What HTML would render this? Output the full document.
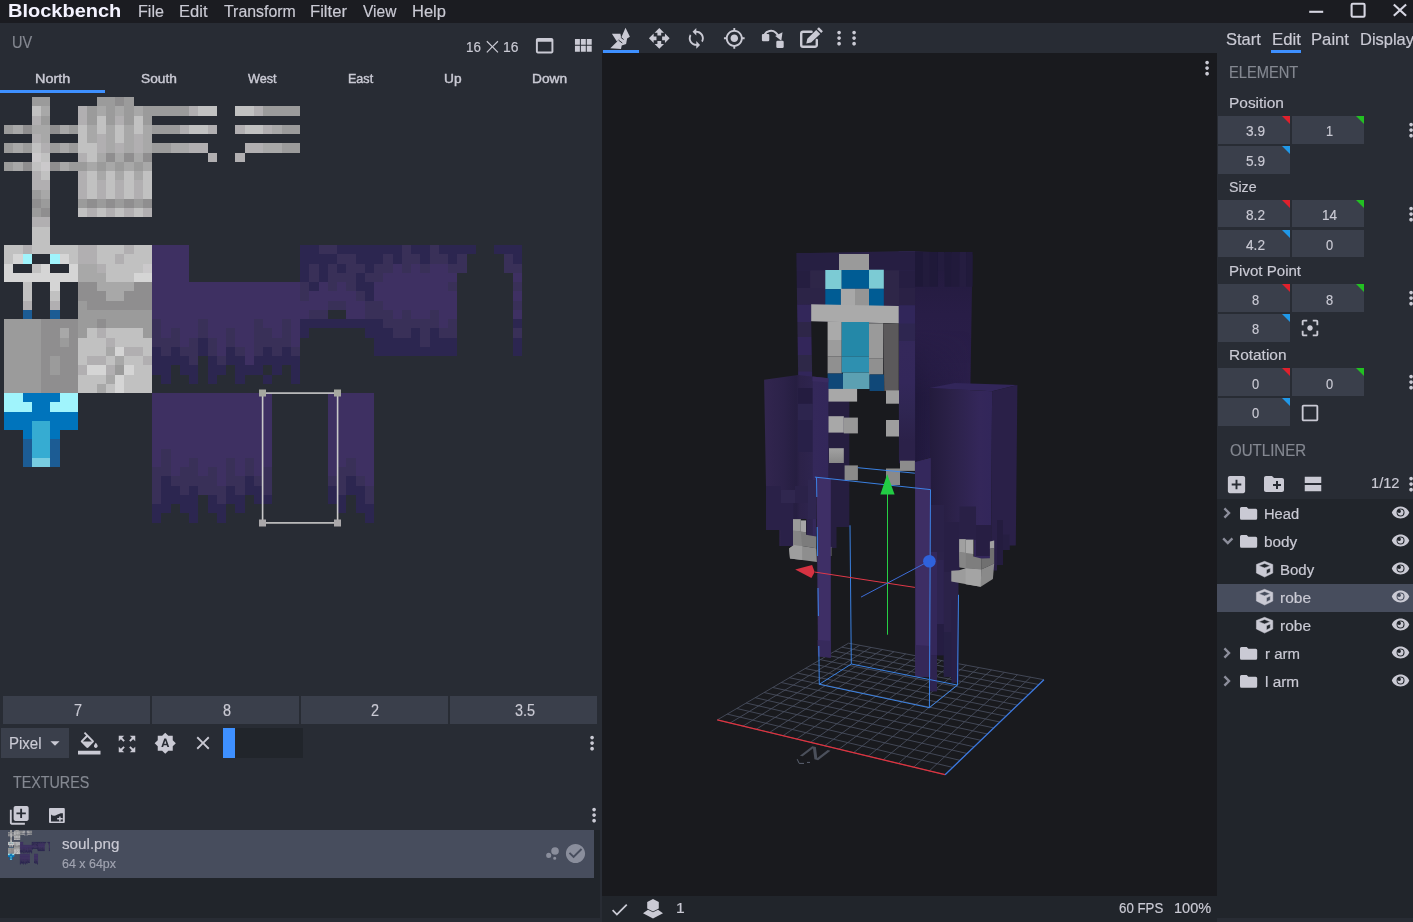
<!DOCTYPE html>
<html lang="en"><head><meta charset="utf-8"><title>Blockbench</title>
<style>
html,body{margin:0;padding:0;background:#282c34;}
body{width:1413px;height:922px;overflow:hidden;position:relative;font-family:"Liberation Sans",sans-serif;}
#app{position:absolute;left:0;top:0;width:1413px;height:922px;overflow:hidden;will-change:transform;}
.b{position:absolute;}
.ic{position:absolute;display:block;overflow:visible;}
.t{position:absolute;white-space:nowrap;line-height:1.149;transform-origin:0 50%;}
</style></head>
<body><div id="app">
<div class="b" style="left:0.00px;top:0.00px;width:1413.00px;height:922.00px;background:#282c34;"></div>
<div class="b" style="left:0.00px;top:0.00px;width:1413.00px;height:22.50px;background:#1b1c21;"></div>
<div class="b" style="left:602.00px;top:53.00px;width:615.00px;height:843.00px;background:#191a1e;"></div>
<div class="b" style="left:602.00px;top:896.00px;width:615.00px;height:26.00px;background:#21252b;"></div>
<div class="b" style="left:1217.00px;top:499.00px;width:196.00px;height:423.00px;background:#21252b;"></div>
<div class="b" style="left:1217.00px;top:918.00px;width:196.00px;height:4.00px;background:#282c34;"></div>
<div class="b" style="left:0.00px;top:830.20px;width:600.00px;height:87.40px;background:#21252b;"></div>
<span class="t " style="left:8.00px;top:0.17px;font-size:18.60px;color:#f4f3ff;font-weight:bold;transform:scaleX(1.0753);">Blockbench</span>
<span class="t " style="left:138.00px;top:1.62px;font-size:17.00px;color:#cacad4;-webkit-text-stroke:0.18px #cacad4;transform:scaleX(0.9475);">File</span>
<span class="t " style="left:179.00px;top:1.62px;font-size:17.00px;color:#cacad4;-webkit-text-stroke:0.18px #cacad4;transform:scaleX(0.9720);">Edit</span>
<span class="t " style="left:224.00px;top:1.62px;font-size:17.00px;color:#cacad4;-webkit-text-stroke:0.18px #cacad4;transform:scaleX(0.9337);">Transform</span>
<span class="t " style="left:310.00px;top:1.62px;font-size:17.00px;color:#cacad4;-webkit-text-stroke:0.18px #cacad4;transform:scaleX(0.9776);">Filter</span>
<span class="t " style="left:363.00px;top:1.62px;font-size:17.00px;color:#cacad4;-webkit-text-stroke:0.18px #cacad4;transform:scaleX(0.9138);">View</span>
<span class="t " style="left:412.00px;top:1.62px;font-size:17.00px;color:#cacad4;-webkit-text-stroke:0.18px #cacad4;transform:scaleX(0.9698);">Help</span>
<svg class="ic" style="left:1300px;top:0;width:113px;height:22px" viewBox="1300 0 113 22"><g stroke="#d6d6e2" stroke-width="2.1" fill="none"><path d="M1309.2 11.8h14"/><rect x="1351.6" y="3.7" width="13" height="13" rx="1.2"/><path d="M1393.8 4.4l12.3 11.4M1406.1 4.4l-12.3 11.4"/></g></svg>
<span class="t " style="left:12.00px;top:32.76px;font-size:16.40px;color:#848891;-webkit-text-stroke:0.18px #848891;transform:scaleX(0.8844);">UV</span>
<span class="t " style="left:466.00px;top:38.16px;font-size:15.40px;color:#cacad4;-webkit-text-stroke:0.18px #cacad4;transform:scaleX(0.8680);">16</span>
<span class="t " style="left:503.00px;top:38.16px;font-size:15.40px;color:#cacad4;-webkit-text-stroke:0.18px #cacad4;transform:scaleX(0.9006);">16</span>
<span class="t" style="left:482.7px;top:33px;font-size:23px;line-height:normal;font-family:'DejaVu Sans','Liberation Sans',sans-serif;font-weight:200;color:#cacad4">⨯</span>
<svg class="ic" style="left:533.40px;top:34.30px;width:23.30px;height:23.30px" viewBox="0 0 24 24"><path fill="#cacad4" fill-rule="evenodd" d="M19 4H5c-1.11 0-2 .9-2 2v12c0 1.1.89 2 2 2h14c1.1 0 2-.9 2-2V6c0-1.1-.89-2-2-2zm0 14H5V8h14v10z"/></svg>
<svg class="ic" style="left:571.40px;top:33.90px;width:23.70px;height:23.70px" viewBox="0 0 24 24"><path fill="#cacad4" fill-rule="evenodd" d="M4 11h5V5H4v6zm0 7h5v-6H4v6zm6 0h5v-6h-5v6zm6 0h5v-6h-5v6zm-6-7h5V5h-5v6zm6-6v6h5V5h-5z"/></svg>
<span class="t " style="left:35.00px;top:71.79px;font-size:12.50px;color:#cacad4;-webkit-text-stroke:0.40px #cacad4;transform:scaleX(1.1557);">North</span>
<span class="t " style="left:141.00px;top:71.79px;font-size:12.50px;color:#cacad4;-webkit-text-stroke:0.40px #cacad4;transform:scaleX(1.0986);">South</span>
<span class="t " style="left:248.00px;top:71.79px;font-size:12.50px;color:#cacad4;-webkit-text-stroke:0.40px #cacad4;transform:scaleX(1.0111);">West</span>
<span class="t " style="left:348.00px;top:71.79px;font-size:12.50px;color:#cacad4;-webkit-text-stroke:0.40px #cacad4;transform:scaleX(1.0042);">East</span>
<span class="t " style="left:444.00px;top:71.79px;font-size:12.50px;color:#cacad4;-webkit-text-stroke:0.40px #cacad4;transform:scaleX(1.0966);">Up</span>
<span class="t " style="left:532.00px;top:71.79px;font-size:12.50px;color:#cacad4;-webkit-text-stroke:0.40px #cacad4;transform:scaleX(1.0965);">Down</span>
<div class="b" style="left:0.00px;top:90.00px;width:105.00px;height:3.00px;background:#3e90ff;"></div>
<svg class="ic" style="left:0;top:93px;width:602px;height:600px" viewBox="0 93 602 600" shape-rendering="crispEdges"><rect x="31.75" y="97.00" width="18.50" height="9.25" fill="#9b9b9b"/><rect x="96.50" y="97.00" width="18.50" height="9.25" fill="#9b9b9b"/><rect x="115.00" y="97.00" width="9.25" height="9.25" fill="#8f8e8f"/><rect x="124.25" y="97.00" width="9.25" height="9.25" fill="#9b9b9b"/><rect x="31.75" y="106.25" width="9.25" height="9.25" fill="#c1c1c1"/><rect x="41.00" y="106.25" width="9.25" height="9.25" fill="#a8a8a8"/><rect x="78.00" y="106.25" width="9.25" height="9.25" fill="#b1afb1"/><rect x="87.25" y="106.25" width="9.25" height="9.25" fill="#9b9b9b"/><rect x="96.50" y="106.25" width="9.25" height="9.25" fill="#a8a8a8"/><rect x="105.75" y="106.25" width="9.25" height="9.25" fill="#9b9b9b"/><rect x="115.00" y="106.25" width="9.25" height="9.25" fill="#a8a8a8"/><rect x="124.25" y="106.25" width="9.25" height="9.25" fill="#9b9b9b"/><rect x="133.50" y="106.25" width="9.25" height="9.25" fill="#a8a8a8"/><rect x="142.75" y="106.25" width="46.25" height="9.25" fill="#9b9b9b"/><rect x="189.00" y="106.25" width="9.25" height="9.25" fill="#b1afb1"/><rect x="198.25" y="106.25" width="18.50" height="9.25" fill="#c1c1c1"/><rect x="235.25" y="106.25" width="18.50" height="9.25" fill="#c1c1c1"/><rect x="253.75" y="106.25" width="9.25" height="9.25" fill="#b1afb1"/><rect x="263.00" y="106.25" width="37.00" height="9.25" fill="#9b9b9b"/><rect x="31.75" y="115.50" width="9.25" height="9.25" fill="#b1afb1"/><rect x="41.00" y="115.50" width="9.25" height="9.25" fill="#9b9b9b"/><rect x="78.00" y="115.50" width="9.25" height="9.25" fill="#b1afb1"/><rect x="87.25" y="115.50" width="9.25" height="9.25" fill="#9b9b9b"/><rect x="96.50" y="115.50" width="9.25" height="9.25" fill="#c1c1c1"/><rect x="105.75" y="115.50" width="9.25" height="9.25" fill="#9b9b9b"/><rect x="115.00" y="115.50" width="9.25" height="9.25" fill="#b1afb1"/><rect x="124.25" y="115.50" width="9.25" height="9.25" fill="#9b9b9b"/><rect x="133.50" y="115.50" width="9.25" height="9.25" fill="#c1c1c1"/><rect x="142.75" y="115.50" width="9.25" height="9.25" fill="#9b9b9b"/><rect x="4.00" y="124.75" width="9.25" height="9.25" fill="#9b9b9b"/><rect x="13.25" y="124.75" width="9.25" height="9.25" fill="#a8a8a8"/><rect x="22.50" y="124.75" width="9.25" height="9.25" fill="#8f8e8f"/><rect x="31.75" y="124.75" width="18.50" height="9.25" fill="#a8a8a8"/><rect x="50.25" y="124.75" width="9.25" height="9.25" fill="#8f8e8f"/><rect x="59.50" y="124.75" width="9.25" height="9.25" fill="#a8a8a8"/><rect x="68.75" y="124.75" width="9.25" height="9.25" fill="#9b9b9b"/><rect x="78.00" y="124.75" width="9.25" height="9.25" fill="#c1c1c1"/><rect x="87.25" y="124.75" width="9.25" height="9.25" fill="#a8a8a8"/><rect x="96.50" y="124.75" width="9.25" height="9.25" fill="#c1c1c1"/><rect x="105.75" y="124.75" width="9.25" height="9.25" fill="#a8a8a8"/><rect x="115.00" y="124.75" width="9.25" height="9.25" fill="#c1c1c1"/><rect x="124.25" y="124.75" width="9.25" height="9.25" fill="#a8a8a8"/><rect x="133.50" y="124.75" width="9.25" height="9.25" fill="#c1c1c1"/><rect x="142.75" y="124.75" width="9.25" height="9.25" fill="#a8a8a8"/><rect x="152.00" y="124.75" width="27.75" height="9.25" fill="#9b9b9b"/><rect x="179.75" y="124.75" width="9.25" height="9.25" fill="#b1afb1"/><rect x="189.00" y="124.75" width="18.50" height="9.25" fill="#c1c1c1"/><rect x="207.50" y="124.75" width="9.25" height="9.25" fill="#b1afb1"/><rect x="235.25" y="124.75" width="9.25" height="9.25" fill="#b1afb1"/><rect x="244.50" y="124.75" width="18.50" height="9.25" fill="#c1c1c1"/><rect x="263.00" y="124.75" width="9.25" height="9.25" fill="#b1afb1"/><rect x="272.25" y="124.75" width="9.25" height="9.25" fill="#a8a8a8"/><rect x="281.50" y="124.75" width="18.50" height="9.25" fill="#9b9b9b"/><rect x="31.75" y="134.00" width="9.25" height="9.25" fill="#b1afb1"/><rect x="41.00" y="134.00" width="9.25" height="9.25" fill="#a8a8a8"/><rect x="78.00" y="134.00" width="9.25" height="9.25" fill="#c1c1c1"/><rect x="87.25" y="134.00" width="9.25" height="9.25" fill="#a8a8a8"/><rect x="96.50" y="134.00" width="9.25" height="9.25" fill="#b1afb1"/><rect x="105.75" y="134.00" width="9.25" height="9.25" fill="#a8a8a8"/><rect x="115.00" y="134.00" width="9.25" height="9.25" fill="#c1c1c1"/><rect x="124.25" y="134.00" width="9.25" height="9.25" fill="#a8a8a8"/><rect x="133.50" y="134.00" width="9.25" height="9.25" fill="#b1afb1"/><rect x="142.75" y="134.00" width="9.25" height="9.25" fill="#a8a8a8"/><rect x="4.00" y="143.25" width="9.25" height="9.25" fill="#9b9b9b"/><rect x="13.25" y="143.25" width="9.25" height="9.25" fill="#a8a8a8"/><rect x="22.50" y="143.25" width="9.25" height="9.25" fill="#9b9b9b"/><rect x="31.75" y="143.25" width="9.25" height="9.25" fill="#c1c1c1"/><rect x="41.00" y="143.25" width="9.25" height="9.25" fill="#b1afb1"/><rect x="50.25" y="143.25" width="9.25" height="9.25" fill="#9b9b9b"/><rect x="59.50" y="143.25" width="9.25" height="9.25" fill="#a8a8a8"/><rect x="68.75" y="143.25" width="9.25" height="9.25" fill="#9b9b9b"/><rect x="78.00" y="143.25" width="18.50" height="9.25" fill="#c1c1c1"/><rect x="96.50" y="143.25" width="9.25" height="9.25" fill="#b1afb1"/><rect x="105.75" y="143.25" width="9.25" height="9.25" fill="#a8a8a8"/><rect x="115.00" y="143.25" width="9.25" height="9.25" fill="#b1afb1"/><rect x="124.25" y="143.25" width="9.25" height="9.25" fill="#a8a8a8"/><rect x="133.50" y="143.25" width="9.25" height="9.25" fill="#b1afb1"/><rect x="142.75" y="143.25" width="9.25" height="9.25" fill="#a8a8a8"/><rect x="152.00" y="143.25" width="18.50" height="9.25" fill="#9b9b9b"/><rect x="170.50" y="143.25" width="18.50" height="9.25" fill="#a8a8a8"/><rect x="189.00" y="143.25" width="18.50" height="9.25" fill="#b1afb1"/><rect x="244.50" y="143.25" width="18.50" height="9.25" fill="#b1afb1"/><rect x="263.00" y="143.25" width="18.50" height="9.25" fill="#a8a8a8"/><rect x="281.50" y="143.25" width="18.50" height="9.25" fill="#9b9b9b"/><rect x="31.75" y="152.50" width="9.25" height="9.25" fill="#cbc9cb"/><rect x="41.00" y="152.50" width="9.25" height="9.25" fill="#c1c1c1"/><rect x="78.00" y="152.50" width="9.25" height="9.25" fill="#b1afb1"/><rect x="87.25" y="152.50" width="9.25" height="9.25" fill="#c1c1c1"/><rect x="96.50" y="152.50" width="9.25" height="9.25" fill="#a8a8a8"/><rect x="105.75" y="152.50" width="9.25" height="9.25" fill="#8f8e8f"/><rect x="115.00" y="152.50" width="9.25" height="9.25" fill="#a8a8a8"/><rect x="124.25" y="152.50" width="9.25" height="9.25" fill="#8f8e8f"/><rect x="133.50" y="152.50" width="9.25" height="9.25" fill="#a8a8a8"/><rect x="142.75" y="152.50" width="9.25" height="9.25" fill="#8f8e8f"/><rect x="207.50" y="152.50" width="9.25" height="9.25" fill="#b1afb1"/><rect x="235.25" y="152.50" width="9.25" height="9.25" fill="#b1afb1"/><rect x="4.00" y="161.75" width="9.25" height="9.25" fill="#9b9b9b"/><rect x="13.25" y="161.75" width="9.25" height="9.25" fill="#a8a8a8"/><rect x="22.50" y="161.75" width="9.25" height="9.25" fill="#8f8e8f"/><rect x="31.75" y="161.75" width="9.25" height="9.25" fill="#c1c1c1"/><rect x="41.00" y="161.75" width="9.25" height="9.25" fill="#cbc9cb"/><rect x="50.25" y="161.75" width="9.25" height="9.25" fill="#8f8e8f"/><rect x="59.50" y="161.75" width="9.25" height="9.25" fill="#a8a8a8"/><rect x="68.75" y="161.75" width="18.50" height="9.25" fill="#9b9b9b"/><rect x="87.25" y="161.75" width="9.25" height="9.25" fill="#a8a8a8"/><rect x="96.50" y="161.75" width="9.25" height="9.25" fill="#9b9b9b"/><rect x="105.75" y="161.75" width="9.25" height="9.25" fill="#a8a8a8"/><rect x="115.00" y="161.75" width="9.25" height="9.25" fill="#9b9b9b"/><rect x="124.25" y="161.75" width="9.25" height="9.25" fill="#a8a8a8"/><rect x="133.50" y="161.75" width="9.25" height="9.25" fill="#9b9b9b"/><rect x="142.75" y="161.75" width="9.25" height="9.25" fill="#a8a8a8"/><rect x="31.75" y="171.00" width="9.25" height="9.25" fill="#b1afb1"/><rect x="41.00" y="171.00" width="9.25" height="9.25" fill="#c1c1c1"/><rect x="78.00" y="171.00" width="9.25" height="9.25" fill="#b1afb1"/><rect x="87.25" y="171.00" width="9.25" height="9.25" fill="#c1c1c1"/><rect x="96.50" y="171.00" width="9.25" height="9.25" fill="#a8a8a8"/><rect x="105.75" y="171.00" width="9.25" height="9.25" fill="#c1c1c1"/><rect x="115.00" y="171.00" width="9.25" height="9.25" fill="#a8a8a8"/><rect x="124.25" y="171.00" width="9.25" height="9.25" fill="#c1c1c1"/><rect x="133.50" y="171.00" width="9.25" height="9.25" fill="#a8a8a8"/><rect x="142.75" y="171.00" width="9.25" height="9.25" fill="#c1c1c1"/><rect x="31.75" y="180.25" width="18.50" height="9.25" fill="#b1afb1"/><rect x="78.00" y="180.25" width="9.25" height="9.25" fill="#b1afb1"/><rect x="87.25" y="180.25" width="9.25" height="9.25" fill="#c1c1c1"/><rect x="96.50" y="180.25" width="9.25" height="9.25" fill="#b1afb1"/><rect x="105.75" y="180.25" width="9.25" height="9.25" fill="#c1c1c1"/><rect x="115.00" y="180.25" width="9.25" height="9.25" fill="#b1afb1"/><rect x="124.25" y="180.25" width="9.25" height="9.25" fill="#c1c1c1"/><rect x="133.50" y="180.25" width="9.25" height="9.25" fill="#b1afb1"/><rect x="142.75" y="180.25" width="9.25" height="9.25" fill="#c1c1c1"/><rect x="31.75" y="189.50" width="9.25" height="9.25" fill="#9b9b9b"/><rect x="41.00" y="189.50" width="9.25" height="9.25" fill="#a8a8a8"/><rect x="78.00" y="189.50" width="9.25" height="9.25" fill="#b1afb1"/><rect x="87.25" y="189.50" width="9.25" height="9.25" fill="#c1c1c1"/><rect x="96.50" y="189.50" width="9.25" height="9.25" fill="#b1afb1"/><rect x="105.75" y="189.50" width="9.25" height="9.25" fill="#c1c1c1"/><rect x="115.00" y="189.50" width="9.25" height="9.25" fill="#b1afb1"/><rect x="124.25" y="189.50" width="9.25" height="9.25" fill="#c1c1c1"/><rect x="133.50" y="189.50" width="9.25" height="9.25" fill="#b1afb1"/><rect x="142.75" y="189.50" width="9.25" height="9.25" fill="#c1c1c1"/><rect x="31.75" y="198.75" width="9.25" height="9.25" fill="#8f8e8f"/><rect x="41.00" y="198.75" width="9.25" height="9.25" fill="#9b9b9b"/><rect x="78.00" y="198.75" width="9.25" height="9.25" fill="#9b9b9b"/><rect x="87.25" y="198.75" width="9.25" height="9.25" fill="#8f8e8f"/><rect x="96.50" y="198.75" width="9.25" height="9.25" fill="#9b9b9b"/><rect x="105.75" y="198.75" width="9.25" height="9.25" fill="#8f8e8f"/><rect x="115.00" y="198.75" width="9.25" height="9.25" fill="#9b9b9b"/><rect x="124.25" y="198.75" width="9.25" height="9.25" fill="#8f8e8f"/><rect x="133.50" y="198.75" width="9.25" height="9.25" fill="#9b9b9b"/><rect x="142.75" y="198.75" width="9.25" height="9.25" fill="#8f8e8f"/><rect x="31.75" y="208.00" width="9.25" height="9.25" fill="#9b9b9b"/><rect x="41.00" y="208.00" width="9.25" height="9.25" fill="#8f8e8f"/><rect x="78.00" y="208.00" width="9.25" height="9.25" fill="#c1c1c1"/><rect x="87.25" y="208.00" width="9.25" height="9.25" fill="#b1afb1"/><rect x="96.50" y="208.00" width="9.25" height="9.25" fill="#c1c1c1"/><rect x="105.75" y="208.00" width="9.25" height="9.25" fill="#b1afb1"/><rect x="115.00" y="208.00" width="9.25" height="9.25" fill="#c1c1c1"/><rect x="124.25" y="208.00" width="9.25" height="9.25" fill="#b1afb1"/><rect x="133.50" y="208.00" width="9.25" height="9.25" fill="#c1c1c1"/><rect x="142.75" y="208.00" width="9.25" height="9.25" fill="#b1afb1"/><rect x="31.75" y="217.25" width="18.50" height="9.25" fill="#b1afb1"/><rect x="31.75" y="226.50" width="18.50" height="9.25" fill="#c1c1c1"/><rect x="31.75" y="235.75" width="18.50" height="9.25" fill="#c1c1c1"/><rect x="4.00" y="245.00" width="18.50" height="9.25" fill="#c1c1c1"/><rect x="22.50" y="245.00" width="9.25" height="9.25" fill="#b1afb1"/><rect x="31.75" y="245.00" width="46.25" height="9.25" fill="#c1c1c1"/><rect x="78.00" y="245.00" width="18.50" height="9.25" fill="#b1afb1"/><rect x="96.50" y="245.00" width="27.75" height="9.25" fill="#c1c1c1"/><rect x="124.25" y="245.00" width="9.25" height="9.25" fill="#b1afb1"/><rect x="133.50" y="245.00" width="18.50" height="9.25" fill="#c1c1c1"/><rect x="152.00" y="245.00" width="37.00" height="9.25" fill="#3e3062"/><rect x="300.00" y="245.00" width="18.50" height="9.25" fill="#2c2650"/><rect x="318.50" y="245.00" width="18.50" height="9.25" fill="#393058"/><rect x="337.00" y="245.00" width="64.75" height="9.25" fill="#2c2650"/><rect x="401.75" y="245.00" width="9.25" height="9.25" fill="#393058"/><rect x="411.00" y="245.00" width="18.50" height="9.25" fill="#2c2650"/><rect x="429.50" y="245.00" width="9.25" height="9.25" fill="#393058"/><rect x="438.75" y="245.00" width="37.00" height="9.25" fill="#2c2650"/><rect x="494.25" y="245.00" width="27.75" height="9.25" fill="#2c2650"/><rect x="4.00" y="254.25" width="9.25" height="9.25" fill="#c1c1c1"/><rect x="13.25" y="254.25" width="9.25" height="9.25" fill="#d5d5d5"/><rect x="22.50" y="254.25" width="9.25" height="9.25" fill="#a0f4fc"/><rect x="50.25" y="254.25" width="9.25" height="9.25" fill="#a0f4fc"/><rect x="59.50" y="254.25" width="9.25" height="9.25" fill="#d5d5d5"/><rect x="68.75" y="254.25" width="9.25" height="9.25" fill="#c1c1c1"/><rect x="78.00" y="254.25" width="18.50" height="9.25" fill="#b1afb1"/><rect x="96.50" y="254.25" width="18.50" height="9.25" fill="#c1c1c1"/><rect x="115.00" y="254.25" width="9.25" height="9.25" fill="#b1afb1"/><rect x="124.25" y="254.25" width="27.75" height="9.25" fill="#c1c1c1"/><rect x="152.00" y="254.25" width="37.00" height="9.25" fill="#3e3062"/><rect x="300.00" y="254.25" width="37.00" height="9.25" fill="#2c2650"/><rect x="337.00" y="254.25" width="18.50" height="9.25" fill="#393058"/><rect x="355.50" y="254.25" width="27.75" height="9.25" fill="#2c2650"/><rect x="383.25" y="254.25" width="9.25" height="9.25" fill="#393058"/><rect x="392.50" y="254.25" width="9.25" height="9.25" fill="#2c2650"/><rect x="401.75" y="254.25" width="18.50" height="9.25" fill="#393058"/><rect x="420.25" y="254.25" width="9.25" height="9.25" fill="#2c2650"/><rect x="429.50" y="254.25" width="18.50" height="9.25" fill="#393058"/><rect x="448.00" y="254.25" width="9.25" height="9.25" fill="#2c2650"/><rect x="457.25" y="254.25" width="9.25" height="9.25" fill="#393058"/><rect x="503.50" y="254.25" width="9.25" height="9.25" fill="#393058"/><rect x="512.75" y="254.25" width="9.25" height="9.25" fill="#2c2650"/><rect x="4.00" y="263.50" width="9.25" height="9.25" fill="#d5d5d5"/><rect x="31.75" y="263.50" width="9.25" height="9.25" fill="#c1c1c1"/><rect x="41.00" y="263.50" width="9.25" height="9.25" fill="#d5d5d5"/><rect x="68.75" y="263.50" width="9.25" height="9.25" fill="#d5d5d5"/><rect x="78.00" y="263.50" width="18.50" height="9.25" fill="#a8a8a8"/><rect x="96.50" y="263.50" width="9.25" height="9.25" fill="#b1afb1"/><rect x="105.75" y="263.50" width="37.00" height="9.25" fill="#c1c1c1"/><rect x="142.75" y="263.50" width="9.25" height="9.25" fill="#cbc9cb"/><rect x="152.00" y="263.50" width="37.00" height="9.25" fill="#3e3062"/><rect x="300.00" y="263.50" width="9.25" height="9.25" fill="#2c2650"/><rect x="309.25" y="263.50" width="9.25" height="9.25" fill="#393058"/><rect x="318.50" y="263.50" width="9.25" height="9.25" fill="#2c2650"/><rect x="327.75" y="263.50" width="9.25" height="9.25" fill="#393058"/><rect x="337.00" y="263.50" width="9.25" height="9.25" fill="#2c2650"/><rect x="346.25" y="263.50" width="18.50" height="9.25" fill="#393058"/><rect x="364.75" y="263.50" width="9.25" height="9.25" fill="#2c2650"/><rect x="374.00" y="263.50" width="18.50" height="9.25" fill="#393058"/><rect x="392.50" y="263.50" width="9.25" height="9.25" fill="#3e3062"/><rect x="401.75" y="263.50" width="9.25" height="9.25" fill="#393058"/><rect x="411.00" y="263.50" width="9.25" height="9.25" fill="#3e3062"/><rect x="420.25" y="263.50" width="9.25" height="9.25" fill="#393058"/><rect x="429.50" y="263.50" width="18.50" height="9.25" fill="#3e3062"/><rect x="448.00" y="263.50" width="18.50" height="9.25" fill="#393058"/><rect x="503.50" y="263.50" width="18.50" height="9.25" fill="#393058"/><rect x="4.00" y="272.75" width="74.00" height="9.25" fill="#d5d5d5"/><rect x="78.00" y="272.75" width="27.75" height="9.25" fill="#a8a8a8"/><rect x="105.75" y="272.75" width="27.75" height="9.25" fill="#c1c1c1"/><rect x="133.50" y="272.75" width="18.50" height="9.25" fill="#d5d5d5"/><rect x="152.00" y="272.75" width="37.00" height="9.25" fill="#3e3062"/><rect x="300.00" y="272.75" width="9.25" height="9.25" fill="#2c2650"/><rect x="309.25" y="272.75" width="9.25" height="9.25" fill="#393058"/><rect x="318.50" y="272.75" width="9.25" height="9.25" fill="#2c2650"/><rect x="327.75" y="272.75" width="27.75" height="9.25" fill="#393058"/><rect x="355.50" y="272.75" width="9.25" height="9.25" fill="#2c2650"/><rect x="364.75" y="272.75" width="18.50" height="9.25" fill="#393058"/><rect x="383.25" y="272.75" width="74.00" height="9.25" fill="#3e3062"/><rect x="512.75" y="272.75" width="9.25" height="9.25" fill="#3e3062"/><rect x="22.50" y="282.00" width="9.25" height="9.25" fill="#c1c1c1"/><rect x="50.25" y="282.00" width="9.25" height="9.25" fill="#d5d5d5"/><rect x="78.00" y="282.00" width="18.50" height="9.25" fill="#8f8e8f"/><rect x="96.50" y="282.00" width="37.00" height="9.25" fill="#a8a8a8"/><rect x="133.50" y="282.00" width="18.50" height="9.25" fill="#8f8e8f"/><rect x="152.00" y="282.00" width="148.00" height="9.25" fill="#3e3062"/><rect x="300.00" y="282.00" width="9.25" height="9.25" fill="#393058"/><rect x="309.25" y="282.00" width="9.25" height="9.25" fill="#2c2650"/><rect x="318.50" y="282.00" width="9.25" height="9.25" fill="#3e3062"/><rect x="327.75" y="282.00" width="9.25" height="9.25" fill="#393058"/><rect x="337.00" y="282.00" width="9.25" height="9.25" fill="#3e3062"/><rect x="346.25" y="282.00" width="9.25" height="9.25" fill="#393058"/><rect x="355.50" y="282.00" width="18.50" height="9.25" fill="#2c2650"/><rect x="374.00" y="282.00" width="74.00" height="9.25" fill="#3e3062"/><rect x="448.00" y="282.00" width="9.25" height="9.25" fill="#393058"/><rect x="512.75" y="282.00" width="9.25" height="9.25" fill="#393058"/><rect x="22.50" y="291.25" width="9.25" height="9.25" fill="#c1c1c1"/><rect x="50.25" y="291.25" width="9.25" height="9.25" fill="#c1c1c1"/><rect x="78.00" y="291.25" width="27.75" height="9.25" fill="#8f8e8f"/><rect x="105.75" y="291.25" width="18.50" height="9.25" fill="#a8a8a8"/><rect x="124.25" y="291.25" width="27.75" height="9.25" fill="#8f8e8f"/><rect x="152.00" y="291.25" width="148.00" height="9.25" fill="#3e3062"/><rect x="300.00" y="291.25" width="9.25" height="9.25" fill="#393058"/><rect x="309.25" y="291.25" width="46.25" height="9.25" fill="#3e3062"/><rect x="355.50" y="291.25" width="9.25" height="9.25" fill="#393058"/><rect x="364.75" y="291.25" width="9.25" height="9.25" fill="#2c2650"/><rect x="374.00" y="291.25" width="83.25" height="9.25" fill="#3e3062"/><rect x="512.75" y="291.25" width="9.25" height="9.25" fill="#3e3062"/><rect x="22.50" y="300.50" width="9.25" height="9.25" fill="#b1afb1"/><rect x="50.25" y="300.50" width="9.25" height="9.25" fill="#b1afb1"/><rect x="78.00" y="300.50" width="9.25" height="9.25" fill="#9b9b9b"/><rect x="87.25" y="300.50" width="64.75" height="9.25" fill="#8f8e8f"/><rect x="152.00" y="300.50" width="175.75" height="9.25" fill="#3e3062"/><rect x="327.75" y="300.50" width="18.50" height="9.25" fill="#393058"/><rect x="346.25" y="300.50" width="18.50" height="9.25" fill="#3e3062"/><rect x="364.75" y="300.50" width="18.50" height="9.25" fill="#393058"/><rect x="383.25" y="300.50" width="74.00" height="9.25" fill="#3e3062"/><rect x="512.75" y="300.50" width="9.25" height="9.25" fill="#393058"/><rect x="22.50" y="309.75" width="9.25" height="9.25" fill="#1c5c94"/><rect x="50.25" y="309.75" width="9.25" height="9.25" fill="#1c5c94"/><rect x="78.00" y="309.75" width="74.00" height="9.25" fill="#9b9b9b"/><rect x="152.00" y="309.75" width="157.25" height="9.25" fill="#3e3062"/><rect x="309.25" y="309.75" width="18.50" height="9.25" fill="#393058"/><rect x="346.25" y="309.75" width="18.50" height="9.25" fill="#3e3062"/><rect x="364.75" y="309.75" width="27.75" height="9.25" fill="#393058"/><rect x="392.50" y="309.75" width="9.25" height="9.25" fill="#3e3062"/><rect x="401.75" y="309.75" width="9.25" height="9.25" fill="#393058"/><rect x="411.00" y="309.75" width="18.50" height="9.25" fill="#3e3062"/><rect x="429.50" y="309.75" width="9.25" height="9.25" fill="#393058"/><rect x="438.75" y="309.75" width="18.50" height="9.25" fill="#3e3062"/><rect x="512.75" y="309.75" width="9.25" height="9.25" fill="#3e3062"/><rect x="4.00" y="319.00" width="37.00" height="9.25" fill="#9b9b9b"/><rect x="41.00" y="319.00" width="37.00" height="9.25" fill="#8f8e8f"/><rect x="78.00" y="319.00" width="18.50" height="9.25" fill="#9b9b9b"/><rect x="96.50" y="319.00" width="9.25" height="9.25" fill="#8f8e8f"/><rect x="105.75" y="319.00" width="46.25" height="9.25" fill="#9b9b9b"/><rect x="152.00" y="319.00" width="9.25" height="9.25" fill="#393058"/><rect x="161.25" y="319.00" width="37.00" height="9.25" fill="#3e3062"/><rect x="198.25" y="319.00" width="9.25" height="9.25" fill="#393058"/><rect x="207.50" y="319.00" width="46.25" height="9.25" fill="#3e3062"/><rect x="253.75" y="319.00" width="9.25" height="9.25" fill="#393058"/><rect x="263.00" y="319.00" width="18.50" height="9.25" fill="#3e3062"/><rect x="281.50" y="319.00" width="9.25" height="9.25" fill="#393058"/><rect x="290.75" y="319.00" width="9.25" height="9.25" fill="#3e3062"/><rect x="300.00" y="319.00" width="83.25" height="9.25" fill="#2c2650"/><rect x="383.25" y="319.00" width="55.50" height="9.25" fill="#393058"/><rect x="438.75" y="319.00" width="9.25" height="9.25" fill="#3e3062"/><rect x="448.00" y="319.00" width="9.25" height="9.25" fill="#393058"/><rect x="512.75" y="319.00" width="9.25" height="9.25" fill="#2c2650"/><rect x="4.00" y="328.25" width="37.00" height="9.25" fill="#9b9b9b"/><rect x="41.00" y="328.25" width="18.50" height="9.25" fill="#8f8e8f"/><rect x="59.50" y="328.25" width="9.25" height="9.25" fill="#a8a8a8"/><rect x="68.75" y="328.25" width="9.25" height="9.25" fill="#8f8e8f"/><rect x="78.00" y="328.25" width="9.25" height="9.25" fill="#9b9b9b"/><rect x="87.25" y="328.25" width="9.25" height="9.25" fill="#c1c1c1"/><rect x="96.50" y="328.25" width="9.25" height="9.25" fill="#b1afb1"/><rect x="105.75" y="328.25" width="37.00" height="9.25" fill="#c1c1c1"/><rect x="142.75" y="328.25" width="9.25" height="9.25" fill="#9b9b9b"/><rect x="152.00" y="328.25" width="9.25" height="9.25" fill="#393058"/><rect x="161.25" y="328.25" width="9.25" height="9.25" fill="#3e3062"/><rect x="170.50" y="328.25" width="9.25" height="9.25" fill="#393058"/><rect x="179.75" y="328.25" width="18.50" height="9.25" fill="#3e3062"/><rect x="198.25" y="328.25" width="9.25" height="9.25" fill="#393058"/><rect x="207.50" y="328.25" width="18.50" height="9.25" fill="#3e3062"/><rect x="226.00" y="328.25" width="9.25" height="9.25" fill="#393058"/><rect x="235.25" y="328.25" width="18.50" height="9.25" fill="#3e3062"/><rect x="253.75" y="328.25" width="18.50" height="9.25" fill="#393058"/><rect x="272.25" y="328.25" width="9.25" height="9.25" fill="#3e3062"/><rect x="281.50" y="328.25" width="9.25" height="9.25" fill="#393058"/><rect x="290.75" y="328.25" width="9.25" height="9.25" fill="#3e3062"/><rect x="300.00" y="328.25" width="9.25" height="9.25" fill="#2c2650"/><rect x="364.75" y="328.25" width="27.75" height="9.25" fill="#2c2650"/><rect x="392.50" y="328.25" width="18.50" height="9.25" fill="#393058"/><rect x="411.00" y="328.25" width="9.25" height="9.25" fill="#2c2650"/><rect x="420.25" y="328.25" width="9.25" height="9.25" fill="#393058"/><rect x="429.50" y="328.25" width="9.25" height="9.25" fill="#2c2650"/><rect x="438.75" y="328.25" width="18.50" height="9.25" fill="#393058"/><rect x="512.75" y="328.25" width="9.25" height="9.25" fill="#393058"/><rect x="4.00" y="337.50" width="37.00" height="9.25" fill="#9b9b9b"/><rect x="41.00" y="337.50" width="18.50" height="9.25" fill="#8f8e8f"/><rect x="59.50" y="337.50" width="9.25" height="9.25" fill="#9b9b9b"/><rect x="68.75" y="337.50" width="9.25" height="9.25" fill="#8f8e8f"/><rect x="78.00" y="337.50" width="27.75" height="9.25" fill="#c1c1c1"/><rect x="105.75" y="337.50" width="9.25" height="9.25" fill="#b1afb1"/><rect x="115.00" y="337.50" width="37.00" height="9.25" fill="#c1c1c1"/><rect x="152.00" y="337.50" width="27.75" height="9.25" fill="#393058"/><rect x="179.75" y="337.50" width="9.25" height="9.25" fill="#3e3062"/><rect x="189.00" y="337.50" width="9.25" height="9.25" fill="#393058"/><rect x="198.25" y="337.50" width="9.25" height="9.25" fill="#2c2650"/><rect x="207.50" y="337.50" width="9.25" height="9.25" fill="#393058"/><rect x="216.75" y="337.50" width="9.25" height="9.25" fill="#3e3062"/><rect x="226.00" y="337.50" width="9.25" height="9.25" fill="#393058"/><rect x="235.25" y="337.50" width="18.50" height="9.25" fill="#3e3062"/><rect x="253.75" y="337.50" width="37.00" height="9.25" fill="#393058"/><rect x="290.75" y="337.50" width="9.25" height="9.25" fill="#3e3062"/><rect x="374.00" y="337.50" width="46.25" height="9.25" fill="#2c2650"/><rect x="420.25" y="337.50" width="9.25" height="9.25" fill="#393058"/><rect x="429.50" y="337.50" width="27.75" height="9.25" fill="#2c2650"/><rect x="512.75" y="337.50" width="9.25" height="9.25" fill="#2c2650"/><rect x="4.00" y="346.75" width="37.00" height="9.25" fill="#9b9b9b"/><rect x="41.00" y="346.75" width="37.00" height="9.25" fill="#8f8e8f"/><rect x="78.00" y="346.75" width="27.75" height="9.25" fill="#c1c1c1"/><rect x="105.75" y="346.75" width="9.25" height="9.25" fill="#a8a8a8"/><rect x="115.00" y="346.75" width="9.25" height="9.25" fill="#d5d5d5"/><rect x="124.25" y="346.75" width="18.50" height="9.25" fill="#b1afb1"/><rect x="142.75" y="346.75" width="9.25" height="9.25" fill="#c1c1c1"/><rect x="152.00" y="346.75" width="9.25" height="9.25" fill="#2c2650"/><rect x="161.25" y="346.75" width="9.25" height="9.25" fill="#393058"/><rect x="170.50" y="346.75" width="9.25" height="9.25" fill="#2c2650"/><rect x="179.75" y="346.75" width="18.50" height="9.25" fill="#393058"/><rect x="198.25" y="346.75" width="9.25" height="9.25" fill="#2c2650"/><rect x="207.50" y="346.75" width="9.25" height="9.25" fill="#393058"/><rect x="216.75" y="346.75" width="9.25" height="9.25" fill="#3e3062"/><rect x="226.00" y="346.75" width="9.25" height="9.25" fill="#2c2650"/><rect x="235.25" y="346.75" width="9.25" height="9.25" fill="#393058"/><rect x="244.50" y="346.75" width="9.25" height="9.25" fill="#3e3062"/><rect x="253.75" y="346.75" width="9.25" height="9.25" fill="#393058"/><rect x="263.00" y="346.75" width="9.25" height="9.25" fill="#2c2650"/><rect x="272.25" y="346.75" width="9.25" height="9.25" fill="#393058"/><rect x="281.50" y="346.75" width="9.25" height="9.25" fill="#2c2650"/><rect x="290.75" y="346.75" width="9.25" height="9.25" fill="#393058"/><rect x="374.00" y="346.75" width="83.25" height="9.25" fill="#2c2650"/><rect x="512.75" y="346.75" width="9.25" height="9.25" fill="#2c2650"/><rect x="4.00" y="356.00" width="37.00" height="9.25" fill="#9b9b9b"/><rect x="41.00" y="356.00" width="9.25" height="9.25" fill="#8f8e8f"/><rect x="50.25" y="356.00" width="9.25" height="9.25" fill="#9b9b9b"/><rect x="59.50" y="356.00" width="18.50" height="9.25" fill="#8f8e8f"/><rect x="78.00" y="356.00" width="9.25" height="9.25" fill="#c1c1c1"/><rect x="87.25" y="356.00" width="18.50" height="9.25" fill="#b1afb1"/><rect x="105.75" y="356.00" width="9.25" height="9.25" fill="#c1c1c1"/><rect x="115.00" y="356.00" width="9.25" height="9.25" fill="#a8a8a8"/><rect x="124.25" y="356.00" width="18.50" height="9.25" fill="#c1c1c1"/><rect x="142.75" y="356.00" width="9.25" height="9.25" fill="#b1afb1"/><rect x="152.00" y="356.00" width="37.00" height="9.25" fill="#2c2650"/><rect x="189.00" y="356.00" width="9.25" height="9.25" fill="#393058"/><rect x="207.50" y="356.00" width="9.25" height="9.25" fill="#2c2650"/><rect x="216.75" y="356.00" width="9.25" height="9.25" fill="#393058"/><rect x="226.00" y="356.00" width="18.50" height="9.25" fill="#2c2650"/><rect x="244.50" y="356.00" width="9.25" height="9.25" fill="#3e3062"/><rect x="253.75" y="356.00" width="46.25" height="9.25" fill="#2c2650"/><rect x="4.00" y="365.25" width="37.00" height="9.25" fill="#9b9b9b"/><rect x="41.00" y="365.25" width="9.25" height="9.25" fill="#8f8e8f"/><rect x="50.25" y="365.25" width="9.25" height="9.25" fill="#9b9b9b"/><rect x="59.50" y="365.25" width="18.50" height="9.25" fill="#8f8e8f"/><rect x="78.00" y="365.25" width="9.25" height="9.25" fill="#b1afb1"/><rect x="87.25" y="365.25" width="18.50" height="9.25" fill="#d5d5d5"/><rect x="105.75" y="365.25" width="9.25" height="9.25" fill="#b1afb1"/><rect x="115.00" y="365.25" width="9.25" height="9.25" fill="#9b9b9b"/><rect x="124.25" y="365.25" width="9.25" height="9.25" fill="#d5d5d5"/><rect x="133.50" y="365.25" width="18.50" height="9.25" fill="#c1c1c1"/><rect x="152.00" y="365.25" width="18.50" height="9.25" fill="#2c2650"/><rect x="179.75" y="365.25" width="18.50" height="9.25" fill="#2c2650"/><rect x="207.50" y="365.25" width="18.50" height="9.25" fill="#2c2650"/><rect x="235.25" y="365.25" width="27.75" height="9.25" fill="#2c2650"/><rect x="272.25" y="365.25" width="9.25" height="9.25" fill="#2c2650"/><rect x="290.75" y="365.25" width="9.25" height="9.25" fill="#2c2650"/><rect x="4.00" y="374.50" width="37.00" height="9.25" fill="#9b9b9b"/><rect x="41.00" y="374.50" width="37.00" height="9.25" fill="#8f8e8f"/><rect x="78.00" y="374.50" width="27.75" height="9.25" fill="#c1c1c1"/><rect x="105.75" y="374.50" width="9.25" height="9.25" fill="#a8a8a8"/><rect x="115.00" y="374.50" width="9.25" height="9.25" fill="#d5d5d5"/><rect x="124.25" y="374.50" width="27.75" height="9.25" fill="#c1c1c1"/><rect x="161.25" y="374.50" width="9.25" height="9.25" fill="#2c2650"/><rect x="189.00" y="374.50" width="9.25" height="9.25" fill="#2c2650"/><rect x="207.50" y="374.50" width="9.25" height="9.25" fill="#2c2650"/><rect x="235.25" y="374.50" width="9.25" height="9.25" fill="#2c2650"/><rect x="263.00" y="374.50" width="9.25" height="9.25" fill="#2c2650"/><rect x="290.75" y="374.50" width="9.25" height="9.25" fill="#2c2650"/><rect x="4.00" y="383.75" width="37.00" height="9.25" fill="#9b9b9b"/><rect x="41.00" y="383.75" width="37.00" height="9.25" fill="#8f8e8f"/><rect x="78.00" y="383.75" width="18.50" height="9.25" fill="#c1c1c1"/><rect x="96.50" y="383.75" width="9.25" height="9.25" fill="#a8a8a8"/><rect x="105.75" y="383.75" width="9.25" height="9.25" fill="#c1c1c1"/><rect x="115.00" y="383.75" width="9.25" height="9.25" fill="#d5d5d5"/><rect x="124.25" y="383.75" width="27.75" height="9.25" fill="#c1c1c1"/><rect x="4.00" y="393.00" width="18.50" height="9.25" fill="#a0f4fc"/><rect x="22.50" y="393.00" width="37.00" height="9.25" fill="#0074bc"/><rect x="59.50" y="393.00" width="18.50" height="9.25" fill="#a0f4fc"/><rect x="152.00" y="393.00" width="120.25" height="9.25" fill="#3e3062"/><rect x="327.75" y="393.00" width="46.25" height="9.25" fill="#3e3062"/><rect x="4.00" y="402.25" width="27.75" height="9.25" fill="#a0f4fc"/><rect x="31.75" y="402.25" width="18.50" height="9.25" fill="#0074bc"/><rect x="50.25" y="402.25" width="27.75" height="9.25" fill="#a0f4fc"/><rect x="152.00" y="402.25" width="120.25" height="9.25" fill="#3e3062"/><rect x="327.75" y="402.25" width="46.25" height="9.25" fill="#3e3062"/><rect x="4.00" y="411.50" width="74.00" height="9.25" fill="#0074bc"/><rect x="152.00" y="411.50" width="120.25" height="9.25" fill="#3e3062"/><rect x="327.75" y="411.50" width="46.25" height="9.25" fill="#3e3062"/><rect x="4.00" y="420.75" width="27.75" height="9.25" fill="#0074bc"/><rect x="31.75" y="420.75" width="18.50" height="9.25" fill="#36acd2"/><rect x="50.25" y="420.75" width="27.75" height="9.25" fill="#0074bc"/><rect x="152.00" y="420.75" width="120.25" height="9.25" fill="#3e3062"/><rect x="327.75" y="420.75" width="46.25" height="9.25" fill="#3e3062"/><rect x="22.50" y="430.00" width="9.25" height="9.25" fill="#0074bc"/><rect x="31.75" y="430.00" width="18.50" height="9.25" fill="#36acd2"/><rect x="50.25" y="430.00" width="9.25" height="9.25" fill="#0074bc"/><rect x="152.00" y="430.00" width="120.25" height="9.25" fill="#3e3062"/><rect x="327.75" y="430.00" width="46.25" height="9.25" fill="#3e3062"/><rect x="22.50" y="439.25" width="9.25" height="9.25" fill="#1c5c94"/><rect x="31.75" y="439.25" width="18.50" height="9.25" fill="#36acd2"/><rect x="50.25" y="439.25" width="9.25" height="9.25" fill="#1c5c94"/><rect x="152.00" y="439.25" width="120.25" height="9.25" fill="#3e3062"/><rect x="327.75" y="439.25" width="46.25" height="9.25" fill="#3e3062"/><rect x="22.50" y="448.50" width="9.25" height="9.25" fill="#1c5c94"/><rect x="31.75" y="448.50" width="18.50" height="9.25" fill="#36acd2"/><rect x="50.25" y="448.50" width="9.25" height="9.25" fill="#1c5c94"/><rect x="152.00" y="448.50" width="9.25" height="9.25" fill="#3e3062"/><rect x="161.25" y="448.50" width="9.25" height="9.25" fill="#393058"/><rect x="170.50" y="448.50" width="101.75" height="9.25" fill="#3e3062"/><rect x="327.75" y="448.50" width="46.25" height="9.25" fill="#3e3062"/><rect x="22.50" y="457.75" width="9.25" height="9.25" fill="#1c5c94"/><rect x="31.75" y="457.75" width="18.50" height="9.25" fill="#78cce0"/><rect x="50.25" y="457.75" width="9.25" height="9.25" fill="#1c5c94"/><rect x="152.00" y="457.75" width="9.25" height="9.25" fill="#3e3062"/><rect x="161.25" y="457.75" width="9.25" height="9.25" fill="#393058"/><rect x="170.50" y="457.75" width="18.50" height="9.25" fill="#3e3062"/><rect x="189.00" y="457.75" width="9.25" height="9.25" fill="#393058"/><rect x="198.25" y="457.75" width="27.75" height="9.25" fill="#3e3062"/><rect x="226.00" y="457.75" width="9.25" height="9.25" fill="#393058"/><rect x="235.25" y="457.75" width="9.25" height="9.25" fill="#3e3062"/><rect x="244.50" y="457.75" width="9.25" height="9.25" fill="#393058"/><rect x="253.75" y="457.75" width="18.50" height="9.25" fill="#3e3062"/><rect x="327.75" y="457.75" width="18.50" height="9.25" fill="#3e3062"/><rect x="346.25" y="457.75" width="9.25" height="9.25" fill="#393058"/><rect x="355.50" y="457.75" width="18.50" height="9.25" fill="#3e3062"/><rect x="152.00" y="467.00" width="18.50" height="9.25" fill="#393058"/><rect x="170.50" y="467.00" width="9.25" height="9.25" fill="#3e3062"/><rect x="179.75" y="467.00" width="18.50" height="9.25" fill="#393058"/><rect x="198.25" y="467.00" width="9.25" height="9.25" fill="#3e3062"/><rect x="207.50" y="467.00" width="9.25" height="9.25" fill="#393058"/><rect x="216.75" y="467.00" width="9.25" height="9.25" fill="#3e3062"/><rect x="226.00" y="467.00" width="9.25" height="9.25" fill="#393058"/><rect x="235.25" y="467.00" width="9.25" height="9.25" fill="#3e3062"/><rect x="244.50" y="467.00" width="9.25" height="9.25" fill="#393058"/><rect x="253.75" y="467.00" width="9.25" height="9.25" fill="#3e3062"/><rect x="263.00" y="467.00" width="9.25" height="9.25" fill="#393058"/><rect x="327.75" y="467.00" width="9.25" height="9.25" fill="#3e3062"/><rect x="337.00" y="467.00" width="18.50" height="9.25" fill="#393058"/><rect x="355.50" y="467.00" width="18.50" height="9.25" fill="#3e3062"/><rect x="152.00" y="476.25" width="9.25" height="9.25" fill="#393058"/><rect x="161.25" y="476.25" width="9.25" height="9.25" fill="#2c2650"/><rect x="170.50" y="476.25" width="46.25" height="9.25" fill="#393058"/><rect x="216.75" y="476.25" width="9.25" height="9.25" fill="#3e3062"/><rect x="226.00" y="476.25" width="18.50" height="9.25" fill="#393058"/><rect x="244.50" y="476.25" width="9.25" height="9.25" fill="#2c2650"/><rect x="253.75" y="476.25" width="18.50" height="9.25" fill="#393058"/><rect x="327.75" y="476.25" width="18.50" height="9.25" fill="#393058"/><rect x="346.25" y="476.25" width="9.25" height="9.25" fill="#2c2650"/><rect x="355.50" y="476.25" width="9.25" height="9.25" fill="#393058"/><rect x="364.75" y="476.25" width="9.25" height="9.25" fill="#3e3062"/><rect x="152.00" y="485.50" width="9.25" height="9.25" fill="#393058"/><rect x="161.25" y="485.50" width="18.50" height="9.25" fill="#2c2650"/><rect x="179.75" y="485.50" width="9.25" height="9.25" fill="#393058"/><rect x="189.00" y="485.50" width="9.25" height="9.25" fill="#2c2650"/><rect x="198.25" y="485.50" width="27.75" height="9.25" fill="#393058"/><rect x="226.00" y="485.50" width="9.25" height="9.25" fill="#2c2650"/><rect x="235.25" y="485.50" width="9.25" height="9.25" fill="#393058"/><rect x="244.50" y="485.50" width="18.50" height="9.25" fill="#2c2650"/><rect x="263.00" y="485.50" width="9.25" height="9.25" fill="#393058"/><rect x="327.75" y="485.50" width="9.25" height="9.25" fill="#2c2650"/><rect x="337.00" y="485.50" width="9.25" height="9.25" fill="#393058"/><rect x="346.25" y="485.50" width="18.50" height="9.25" fill="#2c2650"/><rect x="364.75" y="485.50" width="9.25" height="9.25" fill="#393058"/><rect x="152.00" y="494.75" width="9.25" height="9.25" fill="#393058"/><rect x="161.25" y="494.75" width="37.00" height="9.25" fill="#2c2650"/><rect x="207.50" y="494.75" width="9.25" height="9.25" fill="#2c2650"/><rect x="216.75" y="494.75" width="9.25" height="9.25" fill="#393058"/><rect x="226.00" y="494.75" width="18.50" height="9.25" fill="#2c2650"/><rect x="253.75" y="494.75" width="18.50" height="9.25" fill="#2c2650"/><rect x="327.75" y="494.75" width="18.50" height="9.25" fill="#2c2650"/><rect x="355.50" y="494.75" width="9.25" height="9.25" fill="#2c2650"/><rect x="364.75" y="494.75" width="9.25" height="9.25" fill="#393058"/><rect x="152.00" y="504.00" width="18.50" height="9.25" fill="#2c2650"/><rect x="179.75" y="504.00" width="18.50" height="9.25" fill="#2c2650"/><rect x="207.50" y="504.00" width="18.50" height="9.25" fill="#2c2650"/><rect x="235.25" y="504.00" width="9.25" height="9.25" fill="#2c2650"/><rect x="337.00" y="504.00" width="9.25" height="9.25" fill="#2c2650"/><rect x="355.50" y="504.00" width="18.50" height="9.25" fill="#2c2650"/><rect x="152.00" y="513.25" width="9.25" height="9.25" fill="#2c2650"/><rect x="189.00" y="513.25" width="9.25" height="9.25" fill="#2c2650"/><rect x="216.75" y="513.25" width="9.25" height="9.25" fill="#2c2650"/><rect x="364.75" y="513.25" width="9.25" height="9.25" fill="#2c2650"/></svg>
<svg class="ic" style="left:250px;top:380px;width:100px;height:155px" viewBox="250 380 100 155"><rect x="262.6" y="393.1" width="75" height="129.8" fill="none" stroke="#c8c8c8" stroke-width="1.6"/><g fill="#a6a8a0"><rect x="259" y="389.5" width="7" height="7"/><rect x="334" y="389.5" width="7" height="7"/><rect x="259" y="519.5" width="7" height="7" fill="#aaa8aa"/><rect x="334" y="519.5" width="7" height="7" fill="#aaa8aa"/></g></svg>
<div class="b" style="left:3.00px;top:696.00px;width:146.80px;height:27.60px;background:#3a3f4b;"></div>
<span class="t " style="left:74.00px;top:701.92px;font-size:16.00px;color:#cacad4;-webkit-text-stroke:0.18px #cacad4;transform:scaleX(0.9000);">7</span>
<div class="b" style="left:152.00px;top:696.00px;width:146.70px;height:27.60px;background:#3a3f4b;"></div>
<span class="t " style="left:223.00px;top:701.92px;font-size:16.00px;color:#cacad4;-webkit-text-stroke:0.18px #cacad4;transform:scaleX(0.9000);">8</span>
<div class="b" style="left:300.90px;top:696.00px;width:146.80px;height:27.60px;background:#3a3f4b;"></div>
<span class="t " style="left:371.00px;top:701.92px;font-size:16.00px;color:#cacad4;-webkit-text-stroke:0.18px #cacad4;transform:scaleX(0.9000);">2</span>
<div class="b" style="left:449.80px;top:696.00px;width:147.20px;height:27.60px;background:#3a3f4b;"></div>
<span class="t " style="left:515.00px;top:701.92px;font-size:16.00px;color:#cacad4;-webkit-text-stroke:0.18px #cacad4;transform:scaleX(0.9000);">3.5</span>
<div class="b" style="left:1.00px;top:727.50px;width:68.00px;height:30.50px;background:#3a3f4b;"></div>
<span class="t " style="left:9.00px;top:733.87px;font-size:16.50px;color:#cacad4;-webkit-text-stroke:0.18px #cacad4;transform:scaleX(0.9098);">Pixel</span>
<svg class="ic" style="left:44.00px;top:732.00px;width:22.00px;height:22.00px" viewBox="0 0 24 24"><path fill="#cacad4" fill-rule="evenodd" d="M7 10l5 5 5-5z"/></svg>
<svg class="ic" style="left:77.70px;top:731.50px;width:22.50px;height:22.50px" viewBox="0 0 24 24"><path fill="#cacad4" fill-rule="evenodd" d="M16.56 8.94L7.62 0 6.21 1.41l2.38 2.38-5.15 5.15c-.59.59-.59 1.54 0 2.12l5.5 5.5c.29.29.68.44 1.06.44s.77-.15 1.06-.44l5.5-5.5c.59-.58.59-1.53 0-2.12zM5.21 10L10 5.21 14.79 10H5.21zM19 11.5s-2 2.17-2 3.5c0 1.1.9 2 2 2s2-.9 2-2c0-1.33-2-3.5-2-3.5zM0 20h24v4H0z"/></svg>
<svg class="ic" style="left:116.00px;top:732.50px;width:22.00px;height:22.00px" viewBox="0 0 24 24"><path fill="#cacad4" fill-rule="evenodd" d="M15 3l2.3 2.3-2.89 2.87 1.42 1.42L18.7 6.7 21 9V3zM3 9l2.3-2.3 2.87 2.89 1.42-1.42L6.7 5.3 9 3H3zm6 12l-2.3-2.3 2.89-2.87-1.42-1.42L5.3 17.3 3 15v6zm12-6l-2.3 2.3-2.87-2.89-1.42 1.42 2.89 2.87L15 21h6z"/></svg>
<svg class="ic" style="left:153.50px;top:731.50px;width:22.50px;height:22.50px" viewBox="0 0 24 24"><path fill="#cacad4" fill-rule="evenodd" d="M10.85 12.65h2.3L12 9l-1.15 3.65zM20 8.69V4h-4.69L12 .69 8.69 4H4v4.69L.69 12 4 15.31V20h4.69L12 23.31 15.31 20H20v-4.69L23.31 12 20 8.69zM14.3 16l-.7-2h-3.2l-.7 2H7.8L11 7h2l3.2 9h-1.9z"/></svg>
<svg class="ic" style="left:192.00px;top:732.00px;width:22.00px;height:22.00px" viewBox="0 0 24 24"><path fill="#cacad4" fill-rule="evenodd" d="M19 6.41L17.59 5 12 10.59 6.41 5 5 6.41 10.59 12 5 17.59 6.41 19 12 13.41 17.59 19 19 17.59 13.41 12z"/></svg>
<div class="b" style="left:222.80px;top:727.50px;width:80.20px;height:30.50px;background:#21252b;"></div>
<div class="b" style="left:222.80px;top:727.50px;width:12.50px;height:30.50px;background:#3e90ff;"></div>
<svg class="ic" style="left:581.20px;top:732.10px;width:22.20px;height:22.20px" viewBox="0 0 24 24"><path fill="#cacad4" fill-rule="evenodd" d="M12 8c1.1 0 2-.9 2-2s-.9-2-2-2-2 .9-2 2 .9 2 2 2zm0 2c-1.1 0-2 .9-2 2s.9 2 2 2 2-.9 2-2-.9-2-2-2zm0 6c-1.1 0-2 .9-2 2s.9 2 2 2 2-.9 2-2-.9-2-2-2z"/></svg>
<span class="t " style="left:13.00px;top:772.76px;font-size:16.40px;color:#848891;-webkit-text-stroke:0.18px #848891;transform:scaleX(0.8724);">TEXTURES</span>
<svg class="ic" style="left:8.00px;top:804.00px;width:22.50px;height:22.50px" viewBox="0 0 24 24"><path fill="#cacad4" fill-rule="evenodd" d="M4 6H2v14c0 1.1.9 2 2 2h14v-2H4V6zm16-4H8c-1.1 0-2 .9-2 2v12c0 1.1.9 2 2 2h12c1.1 0 2-.9 2-2V4c0-1.1-.9-2-2-2zm-1 9h-4v4h-2v-4H9V9h4V5h2v4h4v2z"/></svg>
<svg class="ic" style="left:47px;top:805px;width:20px;height:20px" viewBox="47 805 20 20"><path fill="#cacad4" fill-rule="evenodd" d="M50 808.1h13.8a1 1 0 0 1 1 1V822a1 1 0 0 1-1 1H50a1 1 0 0 1-1-1v-12.9a1 1 0 0 1 1-1zM51 814.6c2 1.6 4 1.6 6 .2s4-1.8 5.9-1.6v8.3H51zM59.2 816.4h1.4v1.7h2v1.4h-2v1.7h-1.4v-1.7h-2v-1.4h2z"/></svg>
<svg class="ic" style="left:583.40px;top:804.20px;width:22.20px;height:22.20px" viewBox="0 0 24 24"><path fill="#cacad4" fill-rule="evenodd" d="M12 8c1.1 0 2-.9 2-2s-.9-2-2-2-2 .9-2 2 .9 2 2 2zm0 2c-1.1 0-2 .9-2 2s.9 2 2 2 2-.9 2-2-.9-2-2-2zm0 6c-1.1 0-2 .9-2 2s.9 2 2 2 2-.9 2-2-.9-2-2-2z"/></svg>
<div class="b" style="left:0.00px;top:830.20px;width:594.00px;height:47.50px;background:#474d5d;"></div>
<svg class="ic" style="left:7.9px;top:830.2px;width:47.6px;height:47.6px" viewBox="0 0 64 64"><rect x="3.00" y="0.00" width="2.35" height="1.35" fill="#9b9b9b"/><rect x="10.00" y="0.00" width="2.35" height="1.35" fill="#9b9b9b"/><rect x="12.00" y="0.00" width="1.35" height="1.35" fill="#8f8e8f"/><rect x="13.00" y="0.00" width="1.35" height="1.35" fill="#9b9b9b"/><rect x="3.00" y="1.00" width="1.35" height="1.35" fill="#c1c1c1"/><rect x="4.00" y="1.00" width="1.35" height="1.35" fill="#a8a8a8"/><rect x="8.00" y="1.00" width="1.35" height="1.35" fill="#b1afb1"/><rect x="9.00" y="1.00" width="1.35" height="1.35" fill="#9b9b9b"/><rect x="10.00" y="1.00" width="1.35" height="1.35" fill="#a8a8a8"/><rect x="11.00" y="1.00" width="1.35" height="1.35" fill="#9b9b9b"/><rect x="12.00" y="1.00" width="1.35" height="1.35" fill="#a8a8a8"/><rect x="13.00" y="1.00" width="1.35" height="1.35" fill="#9b9b9b"/><rect x="14.00" y="1.00" width="1.35" height="1.35" fill="#a8a8a8"/><rect x="15.00" y="1.00" width="5.35" height="1.35" fill="#9b9b9b"/><rect x="20.00" y="1.00" width="1.35" height="1.35" fill="#b1afb1"/><rect x="21.00" y="1.00" width="2.35" height="1.35" fill="#c1c1c1"/><rect x="25.00" y="1.00" width="2.35" height="1.35" fill="#c1c1c1"/><rect x="27.00" y="1.00" width="1.35" height="1.35" fill="#b1afb1"/><rect x="28.00" y="1.00" width="4.35" height="1.35" fill="#9b9b9b"/><rect x="3.00" y="2.00" width="1.35" height="1.35" fill="#b1afb1"/><rect x="4.00" y="2.00" width="1.35" height="1.35" fill="#9b9b9b"/><rect x="8.00" y="2.00" width="1.35" height="1.35" fill="#b1afb1"/><rect x="9.00" y="2.00" width="1.35" height="1.35" fill="#9b9b9b"/><rect x="10.00" y="2.00" width="1.35" height="1.35" fill="#c1c1c1"/><rect x="11.00" y="2.00" width="1.35" height="1.35" fill="#9b9b9b"/><rect x="12.00" y="2.00" width="1.35" height="1.35" fill="#b1afb1"/><rect x="13.00" y="2.00" width="1.35" height="1.35" fill="#9b9b9b"/><rect x="14.00" y="2.00" width="1.35" height="1.35" fill="#c1c1c1"/><rect x="15.00" y="2.00" width="1.35" height="1.35" fill="#9b9b9b"/><rect x="0.00" y="3.00" width="1.35" height="1.35" fill="#9b9b9b"/><rect x="1.00" y="3.00" width="1.35" height="1.35" fill="#a8a8a8"/><rect x="2.00" y="3.00" width="1.35" height="1.35" fill="#8f8e8f"/><rect x="3.00" y="3.00" width="2.35" height="1.35" fill="#a8a8a8"/><rect x="5.00" y="3.00" width="1.35" height="1.35" fill="#8f8e8f"/><rect x="6.00" y="3.00" width="1.35" height="1.35" fill="#a8a8a8"/><rect x="7.00" y="3.00" width="1.35" height="1.35" fill="#9b9b9b"/><rect x="8.00" y="3.00" width="1.35" height="1.35" fill="#c1c1c1"/><rect x="9.00" y="3.00" width="1.35" height="1.35" fill="#a8a8a8"/><rect x="10.00" y="3.00" width="1.35" height="1.35" fill="#c1c1c1"/><rect x="11.00" y="3.00" width="1.35" height="1.35" fill="#a8a8a8"/><rect x="12.00" y="3.00" width="1.35" height="1.35" fill="#c1c1c1"/><rect x="13.00" y="3.00" width="1.35" height="1.35" fill="#a8a8a8"/><rect x="14.00" y="3.00" width="1.35" height="1.35" fill="#c1c1c1"/><rect x="15.00" y="3.00" width="1.35" height="1.35" fill="#a8a8a8"/><rect x="16.00" y="3.00" width="3.35" height="1.35" fill="#9b9b9b"/><rect x="19.00" y="3.00" width="1.35" height="1.35" fill="#b1afb1"/><rect x="20.00" y="3.00" width="2.35" height="1.35" fill="#c1c1c1"/><rect x="22.00" y="3.00" width="1.35" height="1.35" fill="#b1afb1"/><rect x="25.00" y="3.00" width="1.35" height="1.35" fill="#b1afb1"/><rect x="26.00" y="3.00" width="2.35" height="1.35" fill="#c1c1c1"/><rect x="28.00" y="3.00" width="1.35" height="1.35" fill="#b1afb1"/><rect x="29.00" y="3.00" width="1.35" height="1.35" fill="#a8a8a8"/><rect x="30.00" y="3.00" width="2.35" height="1.35" fill="#9b9b9b"/><rect x="3.00" y="4.00" width="1.35" height="1.35" fill="#b1afb1"/><rect x="4.00" y="4.00" width="1.35" height="1.35" fill="#a8a8a8"/><rect x="8.00" y="4.00" width="1.35" height="1.35" fill="#c1c1c1"/><rect x="9.00" y="4.00" width="1.35" height="1.35" fill="#a8a8a8"/><rect x="10.00" y="4.00" width="1.35" height="1.35" fill="#b1afb1"/><rect x="11.00" y="4.00" width="1.35" height="1.35" fill="#a8a8a8"/><rect x="12.00" y="4.00" width="1.35" height="1.35" fill="#c1c1c1"/><rect x="13.00" y="4.00" width="1.35" height="1.35" fill="#a8a8a8"/><rect x="14.00" y="4.00" width="1.35" height="1.35" fill="#b1afb1"/><rect x="15.00" y="4.00" width="1.35" height="1.35" fill="#a8a8a8"/><rect x="0.00" y="5.00" width="1.35" height="1.35" fill="#9b9b9b"/><rect x="1.00" y="5.00" width="1.35" height="1.35" fill="#a8a8a8"/><rect x="2.00" y="5.00" width="1.35" height="1.35" fill="#9b9b9b"/><rect x="3.00" y="5.00" width="1.35" height="1.35" fill="#c1c1c1"/><rect x="4.00" y="5.00" width="1.35" height="1.35" fill="#b1afb1"/><rect x="5.00" y="5.00" width="1.35" height="1.35" fill="#9b9b9b"/><rect x="6.00" y="5.00" width="1.35" height="1.35" fill="#a8a8a8"/><rect x="7.00" y="5.00" width="1.35" height="1.35" fill="#9b9b9b"/><rect x="8.00" y="5.00" width="2.35" height="1.35" fill="#c1c1c1"/><rect x="10.00" y="5.00" width="1.35" height="1.35" fill="#b1afb1"/><rect x="11.00" y="5.00" width="1.35" height="1.35" fill="#a8a8a8"/><rect x="12.00" y="5.00" width="1.35" height="1.35" fill="#b1afb1"/><rect x="13.00" y="5.00" width="1.35" height="1.35" fill="#a8a8a8"/><rect x="14.00" y="5.00" width="1.35" height="1.35" fill="#b1afb1"/><rect x="15.00" y="5.00" width="1.35" height="1.35" fill="#a8a8a8"/><rect x="16.00" y="5.00" width="2.35" height="1.35" fill="#9b9b9b"/><rect x="18.00" y="5.00" width="2.35" height="1.35" fill="#a8a8a8"/><rect x="20.00" y="5.00" width="2.35" height="1.35" fill="#b1afb1"/><rect x="26.00" y="5.00" width="2.35" height="1.35" fill="#b1afb1"/><rect x="28.00" y="5.00" width="2.35" height="1.35" fill="#a8a8a8"/><rect x="30.00" y="5.00" width="2.35" height="1.35" fill="#9b9b9b"/><rect x="3.00" y="6.00" width="1.35" height="1.35" fill="#cbc9cb"/><rect x="4.00" y="6.00" width="1.35" height="1.35" fill="#c1c1c1"/><rect x="8.00" y="6.00" width="1.35" height="1.35" fill="#b1afb1"/><rect x="9.00" y="6.00" width="1.35" height="1.35" fill="#c1c1c1"/><rect x="10.00" y="6.00" width="1.35" height="1.35" fill="#a8a8a8"/><rect x="11.00" y="6.00" width="1.35" height="1.35" fill="#8f8e8f"/><rect x="12.00" y="6.00" width="1.35" height="1.35" fill="#a8a8a8"/><rect x="13.00" y="6.00" width="1.35" height="1.35" fill="#8f8e8f"/><rect x="14.00" y="6.00" width="1.35" height="1.35" fill="#a8a8a8"/><rect x="15.00" y="6.00" width="1.35" height="1.35" fill="#8f8e8f"/><rect x="22.00" y="6.00" width="1.35" height="1.35" fill="#b1afb1"/><rect x="25.00" y="6.00" width="1.35" height="1.35" fill="#b1afb1"/><rect x="0.00" y="7.00" width="1.35" height="1.35" fill="#9b9b9b"/><rect x="1.00" y="7.00" width="1.35" height="1.35" fill="#a8a8a8"/><rect x="2.00" y="7.00" width="1.35" height="1.35" fill="#8f8e8f"/><rect x="3.00" y="7.00" width="1.35" height="1.35" fill="#c1c1c1"/><rect x="4.00" y="7.00" width="1.35" height="1.35" fill="#cbc9cb"/><rect x="5.00" y="7.00" width="1.35" height="1.35" fill="#8f8e8f"/><rect x="6.00" y="7.00" width="1.35" height="1.35" fill="#a8a8a8"/><rect x="7.00" y="7.00" width="2.35" height="1.35" fill="#9b9b9b"/><rect x="9.00" y="7.00" width="1.35" height="1.35" fill="#a8a8a8"/><rect x="10.00" y="7.00" width="1.35" height="1.35" fill="#9b9b9b"/><rect x="11.00" y="7.00" width="1.35" height="1.35" fill="#a8a8a8"/><rect x="12.00" y="7.00" width="1.35" height="1.35" fill="#9b9b9b"/><rect x="13.00" y="7.00" width="1.35" height="1.35" fill="#a8a8a8"/><rect x="14.00" y="7.00" width="1.35" height="1.35" fill="#9b9b9b"/><rect x="15.00" y="7.00" width="1.35" height="1.35" fill="#a8a8a8"/><rect x="3.00" y="8.00" width="1.35" height="1.35" fill="#b1afb1"/><rect x="4.00" y="8.00" width="1.35" height="1.35" fill="#c1c1c1"/><rect x="8.00" y="8.00" width="1.35" height="1.35" fill="#b1afb1"/><rect x="9.00" y="8.00" width="1.35" height="1.35" fill="#c1c1c1"/><rect x="10.00" y="8.00" width="1.35" height="1.35" fill="#a8a8a8"/><rect x="11.00" y="8.00" width="1.35" height="1.35" fill="#c1c1c1"/><rect x="12.00" y="8.00" width="1.35" height="1.35" fill="#a8a8a8"/><rect x="13.00" y="8.00" width="1.35" height="1.35" fill="#c1c1c1"/><rect x="14.00" y="8.00" width="1.35" height="1.35" fill="#a8a8a8"/><rect x="15.00" y="8.00" width="1.35" height="1.35" fill="#c1c1c1"/><rect x="3.00" y="9.00" width="2.35" height="1.35" fill="#b1afb1"/><rect x="8.00" y="9.00" width="1.35" height="1.35" fill="#b1afb1"/><rect x="9.00" y="9.00" width="1.35" height="1.35" fill="#c1c1c1"/><rect x="10.00" y="9.00" width="1.35" height="1.35" fill="#b1afb1"/><rect x="11.00" y="9.00" width="1.35" height="1.35" fill="#c1c1c1"/><rect x="12.00" y="9.00" width="1.35" height="1.35" fill="#b1afb1"/><rect x="13.00" y="9.00" width="1.35" height="1.35" fill="#c1c1c1"/><rect x="14.00" y="9.00" width="1.35" height="1.35" fill="#b1afb1"/><rect x="15.00" y="9.00" width="1.35" height="1.35" fill="#c1c1c1"/><rect x="3.00" y="10.00" width="1.35" height="1.35" fill="#9b9b9b"/><rect x="4.00" y="10.00" width="1.35" height="1.35" fill="#a8a8a8"/><rect x="8.00" y="10.00" width="1.35" height="1.35" fill="#b1afb1"/><rect x="9.00" y="10.00" width="1.35" height="1.35" fill="#c1c1c1"/><rect x="10.00" y="10.00" width="1.35" height="1.35" fill="#b1afb1"/><rect x="11.00" y="10.00" width="1.35" height="1.35" fill="#c1c1c1"/><rect x="12.00" y="10.00" width="1.35" height="1.35" fill="#b1afb1"/><rect x="13.00" y="10.00" width="1.35" height="1.35" fill="#c1c1c1"/><rect x="14.00" y="10.00" width="1.35" height="1.35" fill="#b1afb1"/><rect x="15.00" y="10.00" width="1.35" height="1.35" fill="#c1c1c1"/><rect x="3.00" y="11.00" width="1.35" height="1.35" fill="#8f8e8f"/><rect x="4.00" y="11.00" width="1.35" height="1.35" fill="#9b9b9b"/><rect x="8.00" y="11.00" width="1.35" height="1.35" fill="#9b9b9b"/><rect x="9.00" y="11.00" width="1.35" height="1.35" fill="#8f8e8f"/><rect x="10.00" y="11.00" width="1.35" height="1.35" fill="#9b9b9b"/><rect x="11.00" y="11.00" width="1.35" height="1.35" fill="#8f8e8f"/><rect x="12.00" y="11.00" width="1.35" height="1.35" fill="#9b9b9b"/><rect x="13.00" y="11.00" width="1.35" height="1.35" fill="#8f8e8f"/><rect x="14.00" y="11.00" width="1.35" height="1.35" fill="#9b9b9b"/><rect x="15.00" y="11.00" width="1.35" height="1.35" fill="#8f8e8f"/><rect x="3.00" y="12.00" width="1.35" height="1.35" fill="#9b9b9b"/><rect x="4.00" y="12.00" width="1.35" height="1.35" fill="#8f8e8f"/><rect x="8.00" y="12.00" width="1.35" height="1.35" fill="#c1c1c1"/><rect x="9.00" y="12.00" width="1.35" height="1.35" fill="#b1afb1"/><rect x="10.00" y="12.00" width="1.35" height="1.35" fill="#c1c1c1"/><rect x="11.00" y="12.00" width="1.35" height="1.35" fill="#b1afb1"/><rect x="12.00" y="12.00" width="1.35" height="1.35" fill="#c1c1c1"/><rect x="13.00" y="12.00" width="1.35" height="1.35" fill="#b1afb1"/><rect x="14.00" y="12.00" width="1.35" height="1.35" fill="#c1c1c1"/><rect x="15.00" y="12.00" width="1.35" height="1.35" fill="#b1afb1"/><rect x="3.00" y="13.00" width="2.35" height="1.35" fill="#b1afb1"/><rect x="3.00" y="14.00" width="2.35" height="1.35" fill="#c1c1c1"/><rect x="3.00" y="15.00" width="2.35" height="1.35" fill="#c1c1c1"/><rect x="0.00" y="16.00" width="2.35" height="1.35" fill="#c1c1c1"/><rect x="2.00" y="16.00" width="1.35" height="1.35" fill="#b1afb1"/><rect x="3.00" y="16.00" width="5.35" height="1.35" fill="#c1c1c1"/><rect x="8.00" y="16.00" width="2.35" height="1.35" fill="#b1afb1"/><rect x="10.00" y="16.00" width="3.35" height="1.35" fill="#c1c1c1"/><rect x="13.00" y="16.00" width="1.35" height="1.35" fill="#b1afb1"/><rect x="14.00" y="16.00" width="2.35" height="1.35" fill="#c1c1c1"/><rect x="16.00" y="16.00" width="4.35" height="1.35" fill="#3e3062"/><rect x="32.00" y="16.00" width="2.35" height="1.35" fill="#2c2650"/><rect x="34.00" y="16.00" width="2.35" height="1.35" fill="#393058"/><rect x="36.00" y="16.00" width="7.35" height="1.35" fill="#2c2650"/><rect x="43.00" y="16.00" width="1.35" height="1.35" fill="#393058"/><rect x="44.00" y="16.00" width="2.35" height="1.35" fill="#2c2650"/><rect x="46.00" y="16.00" width="1.35" height="1.35" fill="#393058"/><rect x="47.00" y="16.00" width="4.35" height="1.35" fill="#2c2650"/><rect x="53.00" y="16.00" width="3.35" height="1.35" fill="#2c2650"/><rect x="0.00" y="17.00" width="1.35" height="1.35" fill="#c1c1c1"/><rect x="1.00" y="17.00" width="1.35" height="1.35" fill="#d5d5d5"/><rect x="2.00" y="17.00" width="1.35" height="1.35" fill="#a0f4fc"/><rect x="5.00" y="17.00" width="1.35" height="1.35" fill="#a0f4fc"/><rect x="6.00" y="17.00" width="1.35" height="1.35" fill="#d5d5d5"/><rect x="7.00" y="17.00" width="1.35" height="1.35" fill="#c1c1c1"/><rect x="8.00" y="17.00" width="2.35" height="1.35" fill="#b1afb1"/><rect x="10.00" y="17.00" width="2.35" height="1.35" fill="#c1c1c1"/><rect x="12.00" y="17.00" width="1.35" height="1.35" fill="#b1afb1"/><rect x="13.00" y="17.00" width="3.35" height="1.35" fill="#c1c1c1"/><rect x="16.00" y="17.00" width="4.35" height="1.35" fill="#3e3062"/><rect x="32.00" y="17.00" width="4.35" height="1.35" fill="#2c2650"/><rect x="36.00" y="17.00" width="2.35" height="1.35" fill="#393058"/><rect x="38.00" y="17.00" width="3.35" height="1.35" fill="#2c2650"/><rect x="41.00" y="17.00" width="1.35" height="1.35" fill="#393058"/><rect x="42.00" y="17.00" width="1.35" height="1.35" fill="#2c2650"/><rect x="43.00" y="17.00" width="2.35" height="1.35" fill="#393058"/><rect x="45.00" y="17.00" width="1.35" height="1.35" fill="#2c2650"/><rect x="46.00" y="17.00" width="2.35" height="1.35" fill="#393058"/><rect x="48.00" y="17.00" width="1.35" height="1.35" fill="#2c2650"/><rect x="49.00" y="17.00" width="1.35" height="1.35" fill="#393058"/><rect x="54.00" y="17.00" width="1.35" height="1.35" fill="#393058"/><rect x="55.00" y="17.00" width="1.35" height="1.35" fill="#2c2650"/><rect x="0.00" y="18.00" width="1.35" height="1.35" fill="#d5d5d5"/><rect x="3.00" y="18.00" width="1.35" height="1.35" fill="#c1c1c1"/><rect x="4.00" y="18.00" width="1.35" height="1.35" fill="#d5d5d5"/><rect x="7.00" y="18.00" width="1.35" height="1.35" fill="#d5d5d5"/><rect x="8.00" y="18.00" width="2.35" height="1.35" fill="#a8a8a8"/><rect x="10.00" y="18.00" width="1.35" height="1.35" fill="#b1afb1"/><rect x="11.00" y="18.00" width="4.35" height="1.35" fill="#c1c1c1"/><rect x="15.00" y="18.00" width="1.35" height="1.35" fill="#cbc9cb"/><rect x="16.00" y="18.00" width="4.35" height="1.35" fill="#3e3062"/><rect x="32.00" y="18.00" width="1.35" height="1.35" fill="#2c2650"/><rect x="33.00" y="18.00" width="1.35" height="1.35" fill="#393058"/><rect x="34.00" y="18.00" width="1.35" height="1.35" fill="#2c2650"/><rect x="35.00" y="18.00" width="1.35" height="1.35" fill="#393058"/><rect x="36.00" y="18.00" width="1.35" height="1.35" fill="#2c2650"/><rect x="37.00" y="18.00" width="2.35" height="1.35" fill="#393058"/><rect x="39.00" y="18.00" width="1.35" height="1.35" fill="#2c2650"/><rect x="40.00" y="18.00" width="2.35" height="1.35" fill="#393058"/><rect x="42.00" y="18.00" width="1.35" height="1.35" fill="#3e3062"/><rect x="43.00" y="18.00" width="1.35" height="1.35" fill="#393058"/><rect x="44.00" y="18.00" width="1.35" height="1.35" fill="#3e3062"/><rect x="45.00" y="18.00" width="1.35" height="1.35" fill="#393058"/><rect x="46.00" y="18.00" width="2.35" height="1.35" fill="#3e3062"/><rect x="48.00" y="18.00" width="2.35" height="1.35" fill="#393058"/><rect x="54.00" y="18.00" width="2.35" height="1.35" fill="#393058"/><rect x="0.00" y="19.00" width="8.35" height="1.35" fill="#d5d5d5"/><rect x="8.00" y="19.00" width="3.35" height="1.35" fill="#a8a8a8"/><rect x="11.00" y="19.00" width="3.35" height="1.35" fill="#c1c1c1"/><rect x="14.00" y="19.00" width="2.35" height="1.35" fill="#d5d5d5"/><rect x="16.00" y="19.00" width="4.35" height="1.35" fill="#3e3062"/><rect x="32.00" y="19.00" width="1.35" height="1.35" fill="#2c2650"/><rect x="33.00" y="19.00" width="1.35" height="1.35" fill="#393058"/><rect x="34.00" y="19.00" width="1.35" height="1.35" fill="#2c2650"/><rect x="35.00" y="19.00" width="3.35" height="1.35" fill="#393058"/><rect x="38.00" y="19.00" width="1.35" height="1.35" fill="#2c2650"/><rect x="39.00" y="19.00" width="2.35" height="1.35" fill="#393058"/><rect x="41.00" y="19.00" width="8.35" height="1.35" fill="#3e3062"/><rect x="55.00" y="19.00" width="1.35" height="1.35" fill="#3e3062"/><rect x="2.00" y="20.00" width="1.35" height="1.35" fill="#c1c1c1"/><rect x="5.00" y="20.00" width="1.35" height="1.35" fill="#d5d5d5"/><rect x="8.00" y="20.00" width="2.35" height="1.35" fill="#8f8e8f"/><rect x="10.00" y="20.00" width="4.35" height="1.35" fill="#a8a8a8"/><rect x="14.00" y="20.00" width="2.35" height="1.35" fill="#8f8e8f"/><rect x="16.00" y="20.00" width="16.35" height="1.35" fill="#3e3062"/><rect x="32.00" y="20.00" width="1.35" height="1.35" fill="#393058"/><rect x="33.00" y="20.00" width="1.35" height="1.35" fill="#2c2650"/><rect x="34.00" y="20.00" width="1.35" height="1.35" fill="#3e3062"/><rect x="35.00" y="20.00" width="1.35" height="1.35" fill="#393058"/><rect x="36.00" y="20.00" width="1.35" height="1.35" fill="#3e3062"/><rect x="37.00" y="20.00" width="1.35" height="1.35" fill="#393058"/><rect x="38.00" y="20.00" width="2.35" height="1.35" fill="#2c2650"/><rect x="40.00" y="20.00" width="8.35" height="1.35" fill="#3e3062"/><rect x="48.00" y="20.00" width="1.35" height="1.35" fill="#393058"/><rect x="55.00" y="20.00" width="1.35" height="1.35" fill="#393058"/><rect x="2.00" y="21.00" width="1.35" height="1.35" fill="#c1c1c1"/><rect x="5.00" y="21.00" width="1.35" height="1.35" fill="#c1c1c1"/><rect x="8.00" y="21.00" width="3.35" height="1.35" fill="#8f8e8f"/><rect x="11.00" y="21.00" width="2.35" height="1.35" fill="#a8a8a8"/><rect x="13.00" y="21.00" width="3.35" height="1.35" fill="#8f8e8f"/><rect x="16.00" y="21.00" width="16.35" height="1.35" fill="#3e3062"/><rect x="32.00" y="21.00" width="1.35" height="1.35" fill="#393058"/><rect x="33.00" y="21.00" width="5.35" height="1.35" fill="#3e3062"/><rect x="38.00" y="21.00" width="1.35" height="1.35" fill="#393058"/><rect x="39.00" y="21.00" width="1.35" height="1.35" fill="#2c2650"/><rect x="40.00" y="21.00" width="9.35" height="1.35" fill="#3e3062"/><rect x="55.00" y="21.00" width="1.35" height="1.35" fill="#3e3062"/><rect x="2.00" y="22.00" width="1.35" height="1.35" fill="#b1afb1"/><rect x="5.00" y="22.00" width="1.35" height="1.35" fill="#b1afb1"/><rect x="8.00" y="22.00" width="1.35" height="1.35" fill="#9b9b9b"/><rect x="9.00" y="22.00" width="7.35" height="1.35" fill="#8f8e8f"/><rect x="16.00" y="22.00" width="19.35" height="1.35" fill="#3e3062"/><rect x="35.00" y="22.00" width="2.35" height="1.35" fill="#393058"/><rect x="37.00" y="22.00" width="2.35" height="1.35" fill="#3e3062"/><rect x="39.00" y="22.00" width="2.35" height="1.35" fill="#393058"/><rect x="41.00" y="22.00" width="8.35" height="1.35" fill="#3e3062"/><rect x="55.00" y="22.00" width="1.35" height="1.35" fill="#393058"/><rect x="2.00" y="23.00" width="1.35" height="1.35" fill="#1c5c94"/><rect x="5.00" y="23.00" width="1.35" height="1.35" fill="#1c5c94"/><rect x="8.00" y="23.00" width="8.35" height="1.35" fill="#9b9b9b"/><rect x="16.00" y="23.00" width="17.35" height="1.35" fill="#3e3062"/><rect x="33.00" y="23.00" width="2.35" height="1.35" fill="#393058"/><rect x="37.00" y="23.00" width="2.35" height="1.35" fill="#3e3062"/><rect x="39.00" y="23.00" width="3.35" height="1.35" fill="#393058"/><rect x="42.00" y="23.00" width="1.35" height="1.35" fill="#3e3062"/><rect x="43.00" y="23.00" width="1.35" height="1.35" fill="#393058"/><rect x="44.00" y="23.00" width="2.35" height="1.35" fill="#3e3062"/><rect x="46.00" y="23.00" width="1.35" height="1.35" fill="#393058"/><rect x="47.00" y="23.00" width="2.35" height="1.35" fill="#3e3062"/><rect x="55.00" y="23.00" width="1.35" height="1.35" fill="#3e3062"/><rect x="0.00" y="24.00" width="4.35" height="1.35" fill="#9b9b9b"/><rect x="4.00" y="24.00" width="4.35" height="1.35" fill="#8f8e8f"/><rect x="8.00" y="24.00" width="2.35" height="1.35" fill="#9b9b9b"/><rect x="10.00" y="24.00" width="1.35" height="1.35" fill="#8f8e8f"/><rect x="11.00" y="24.00" width="5.35" height="1.35" fill="#9b9b9b"/><rect x="16.00" y="24.00" width="1.35" height="1.35" fill="#393058"/><rect x="17.00" y="24.00" width="4.35" height="1.35" fill="#3e3062"/><rect x="21.00" y="24.00" width="1.35" height="1.35" fill="#393058"/><rect x="22.00" y="24.00" width="5.35" height="1.35" fill="#3e3062"/><rect x="27.00" y="24.00" width="1.35" height="1.35" fill="#393058"/><rect x="28.00" y="24.00" width="2.35" height="1.35" fill="#3e3062"/><rect x="30.00" y="24.00" width="1.35" height="1.35" fill="#393058"/><rect x="31.00" y="24.00" width="1.35" height="1.35" fill="#3e3062"/><rect x="32.00" y="24.00" width="9.35" height="1.35" fill="#2c2650"/><rect x="41.00" y="24.00" width="6.35" height="1.35" fill="#393058"/><rect x="47.00" y="24.00" width="1.35" height="1.35" fill="#3e3062"/><rect x="48.00" y="24.00" width="1.35" height="1.35" fill="#393058"/><rect x="55.00" y="24.00" width="1.35" height="1.35" fill="#2c2650"/><rect x="0.00" y="25.00" width="4.35" height="1.35" fill="#9b9b9b"/><rect x="4.00" y="25.00" width="2.35" height="1.35" fill="#8f8e8f"/><rect x="6.00" y="25.00" width="1.35" height="1.35" fill="#a8a8a8"/><rect x="7.00" y="25.00" width="1.35" height="1.35" fill="#8f8e8f"/><rect x="8.00" y="25.00" width="1.35" height="1.35" fill="#9b9b9b"/><rect x="9.00" y="25.00" width="1.35" height="1.35" fill="#c1c1c1"/><rect x="10.00" y="25.00" width="1.35" height="1.35" fill="#b1afb1"/><rect x="11.00" y="25.00" width="4.35" height="1.35" fill="#c1c1c1"/><rect x="15.00" y="25.00" width="1.35" height="1.35" fill="#9b9b9b"/><rect x="16.00" y="25.00" width="1.35" height="1.35" fill="#393058"/><rect x="17.00" y="25.00" width="1.35" height="1.35" fill="#3e3062"/><rect x="18.00" y="25.00" width="1.35" height="1.35" fill="#393058"/><rect x="19.00" y="25.00" width="2.35" height="1.35" fill="#3e3062"/><rect x="21.00" y="25.00" width="1.35" height="1.35" fill="#393058"/><rect x="22.00" y="25.00" width="2.35" height="1.35" fill="#3e3062"/><rect x="24.00" y="25.00" width="1.35" height="1.35" fill="#393058"/><rect x="25.00" y="25.00" width="2.35" height="1.35" fill="#3e3062"/><rect x="27.00" y="25.00" width="2.35" height="1.35" fill="#393058"/><rect x="29.00" y="25.00" width="1.35" height="1.35" fill="#3e3062"/><rect x="30.00" y="25.00" width="1.35" height="1.35" fill="#393058"/><rect x="31.00" y="25.00" width="1.35" height="1.35" fill="#3e3062"/><rect x="32.00" y="25.00" width="1.35" height="1.35" fill="#2c2650"/><rect x="39.00" y="25.00" width="3.35" height="1.35" fill="#2c2650"/><rect x="42.00" y="25.00" width="2.35" height="1.35" fill="#393058"/><rect x="44.00" y="25.00" width="1.35" height="1.35" fill="#2c2650"/><rect x="45.00" y="25.00" width="1.35" height="1.35" fill="#393058"/><rect x="46.00" y="25.00" width="1.35" height="1.35" fill="#2c2650"/><rect x="47.00" y="25.00" width="2.35" height="1.35" fill="#393058"/><rect x="55.00" y="25.00" width="1.35" height="1.35" fill="#393058"/><rect x="0.00" y="26.00" width="4.35" height="1.35" fill="#9b9b9b"/><rect x="4.00" y="26.00" width="2.35" height="1.35" fill="#8f8e8f"/><rect x="6.00" y="26.00" width="1.35" height="1.35" fill="#9b9b9b"/><rect x="7.00" y="26.00" width="1.35" height="1.35" fill="#8f8e8f"/><rect x="8.00" y="26.00" width="3.35" height="1.35" fill="#c1c1c1"/><rect x="11.00" y="26.00" width="1.35" height="1.35" fill="#b1afb1"/><rect x="12.00" y="26.00" width="4.35" height="1.35" fill="#c1c1c1"/><rect x="16.00" y="26.00" width="3.35" height="1.35" fill="#393058"/><rect x="19.00" y="26.00" width="1.35" height="1.35" fill="#3e3062"/><rect x="20.00" y="26.00" width="1.35" height="1.35" fill="#393058"/><rect x="21.00" y="26.00" width="1.35" height="1.35" fill="#2c2650"/><rect x="22.00" y="26.00" width="1.35" height="1.35" fill="#393058"/><rect x="23.00" y="26.00" width="1.35" height="1.35" fill="#3e3062"/><rect x="24.00" y="26.00" width="1.35" height="1.35" fill="#393058"/><rect x="25.00" y="26.00" width="2.35" height="1.35" fill="#3e3062"/><rect x="27.00" y="26.00" width="4.35" height="1.35" fill="#393058"/><rect x="31.00" y="26.00" width="1.35" height="1.35" fill="#3e3062"/><rect x="40.00" y="26.00" width="5.35" height="1.35" fill="#2c2650"/><rect x="45.00" y="26.00" width="1.35" height="1.35" fill="#393058"/><rect x="46.00" y="26.00" width="3.35" height="1.35" fill="#2c2650"/><rect x="55.00" y="26.00" width="1.35" height="1.35" fill="#2c2650"/><rect x="0.00" y="27.00" width="4.35" height="1.35" fill="#9b9b9b"/><rect x="4.00" y="27.00" width="4.35" height="1.35" fill="#8f8e8f"/><rect x="8.00" y="27.00" width="3.35" height="1.35" fill="#c1c1c1"/><rect x="11.00" y="27.00" width="1.35" height="1.35" fill="#a8a8a8"/><rect x="12.00" y="27.00" width="1.35" height="1.35" fill="#d5d5d5"/><rect x="13.00" y="27.00" width="2.35" height="1.35" fill="#b1afb1"/><rect x="15.00" y="27.00" width="1.35" height="1.35" fill="#c1c1c1"/><rect x="16.00" y="27.00" width="1.35" height="1.35" fill="#2c2650"/><rect x="17.00" y="27.00" width="1.35" height="1.35" fill="#393058"/><rect x="18.00" y="27.00" width="1.35" height="1.35" fill="#2c2650"/><rect x="19.00" y="27.00" width="2.35" height="1.35" fill="#393058"/><rect x="21.00" y="27.00" width="1.35" height="1.35" fill="#2c2650"/><rect x="22.00" y="27.00" width="1.35" height="1.35" fill="#393058"/><rect x="23.00" y="27.00" width="1.35" height="1.35" fill="#3e3062"/><rect x="24.00" y="27.00" width="1.35" height="1.35" fill="#2c2650"/><rect x="25.00" y="27.00" width="1.35" height="1.35" fill="#393058"/><rect x="26.00" y="27.00" width="1.35" height="1.35" fill="#3e3062"/><rect x="27.00" y="27.00" width="1.35" height="1.35" fill="#393058"/><rect x="28.00" y="27.00" width="1.35" height="1.35" fill="#2c2650"/><rect x="29.00" y="27.00" width="1.35" height="1.35" fill="#393058"/><rect x="30.00" y="27.00" width="1.35" height="1.35" fill="#2c2650"/><rect x="31.00" y="27.00" width="1.35" height="1.35" fill="#393058"/><rect x="40.00" y="27.00" width="9.35" height="1.35" fill="#2c2650"/><rect x="55.00" y="27.00" width="1.35" height="1.35" fill="#2c2650"/><rect x="0.00" y="28.00" width="4.35" height="1.35" fill="#9b9b9b"/><rect x="4.00" y="28.00" width="1.35" height="1.35" fill="#8f8e8f"/><rect x="5.00" y="28.00" width="1.35" height="1.35" fill="#9b9b9b"/><rect x="6.00" y="28.00" width="2.35" height="1.35" fill="#8f8e8f"/><rect x="8.00" y="28.00" width="1.35" height="1.35" fill="#c1c1c1"/><rect x="9.00" y="28.00" width="2.35" height="1.35" fill="#b1afb1"/><rect x="11.00" y="28.00" width="1.35" height="1.35" fill="#c1c1c1"/><rect x="12.00" y="28.00" width="1.35" height="1.35" fill="#a8a8a8"/><rect x="13.00" y="28.00" width="2.35" height="1.35" fill="#c1c1c1"/><rect x="15.00" y="28.00" width="1.35" height="1.35" fill="#b1afb1"/><rect x="16.00" y="28.00" width="4.35" height="1.35" fill="#2c2650"/><rect x="20.00" y="28.00" width="1.35" height="1.35" fill="#393058"/><rect x="22.00" y="28.00" width="1.35" height="1.35" fill="#2c2650"/><rect x="23.00" y="28.00" width="1.35" height="1.35" fill="#393058"/><rect x="24.00" y="28.00" width="2.35" height="1.35" fill="#2c2650"/><rect x="26.00" y="28.00" width="1.35" height="1.35" fill="#3e3062"/><rect x="27.00" y="28.00" width="5.35" height="1.35" fill="#2c2650"/><rect x="0.00" y="29.00" width="4.35" height="1.35" fill="#9b9b9b"/><rect x="4.00" y="29.00" width="1.35" height="1.35" fill="#8f8e8f"/><rect x="5.00" y="29.00" width="1.35" height="1.35" fill="#9b9b9b"/><rect x="6.00" y="29.00" width="2.35" height="1.35" fill="#8f8e8f"/><rect x="8.00" y="29.00" width="1.35" height="1.35" fill="#b1afb1"/><rect x="9.00" y="29.00" width="2.35" height="1.35" fill="#d5d5d5"/><rect x="11.00" y="29.00" width="1.35" height="1.35" fill="#b1afb1"/><rect x="12.00" y="29.00" width="1.35" height="1.35" fill="#9b9b9b"/><rect x="13.00" y="29.00" width="1.35" height="1.35" fill="#d5d5d5"/><rect x="14.00" y="29.00" width="2.35" height="1.35" fill="#c1c1c1"/><rect x="16.00" y="29.00" width="2.35" height="1.35" fill="#2c2650"/><rect x="19.00" y="29.00" width="2.35" height="1.35" fill="#2c2650"/><rect x="22.00" y="29.00" width="2.35" height="1.35" fill="#2c2650"/><rect x="25.00" y="29.00" width="3.35" height="1.35" fill="#2c2650"/><rect x="29.00" y="29.00" width="1.35" height="1.35" fill="#2c2650"/><rect x="31.00" y="29.00" width="1.35" height="1.35" fill="#2c2650"/><rect x="0.00" y="30.00" width="4.35" height="1.35" fill="#9b9b9b"/><rect x="4.00" y="30.00" width="4.35" height="1.35" fill="#8f8e8f"/><rect x="8.00" y="30.00" width="3.35" height="1.35" fill="#c1c1c1"/><rect x="11.00" y="30.00" width="1.35" height="1.35" fill="#a8a8a8"/><rect x="12.00" y="30.00" width="1.35" height="1.35" fill="#d5d5d5"/><rect x="13.00" y="30.00" width="3.35" height="1.35" fill="#c1c1c1"/><rect x="17.00" y="30.00" width="1.35" height="1.35" fill="#2c2650"/><rect x="20.00" y="30.00" width="1.35" height="1.35" fill="#2c2650"/><rect x="22.00" y="30.00" width="1.35" height="1.35" fill="#2c2650"/><rect x="25.00" y="30.00" width="1.35" height="1.35" fill="#2c2650"/><rect x="28.00" y="30.00" width="1.35" height="1.35" fill="#2c2650"/><rect x="31.00" y="30.00" width="1.35" height="1.35" fill="#2c2650"/><rect x="0.00" y="31.00" width="4.35" height="1.35" fill="#9b9b9b"/><rect x="4.00" y="31.00" width="4.35" height="1.35" fill="#8f8e8f"/><rect x="8.00" y="31.00" width="2.35" height="1.35" fill="#c1c1c1"/><rect x="10.00" y="31.00" width="1.35" height="1.35" fill="#a8a8a8"/><rect x="11.00" y="31.00" width="1.35" height="1.35" fill="#c1c1c1"/><rect x="12.00" y="31.00" width="1.35" height="1.35" fill="#d5d5d5"/><rect x="13.00" y="31.00" width="3.35" height="1.35" fill="#c1c1c1"/><rect x="0.00" y="32.00" width="2.35" height="1.35" fill="#a0f4fc"/><rect x="2.00" y="32.00" width="4.35" height="1.35" fill="#0074bc"/><rect x="6.00" y="32.00" width="2.35" height="1.35" fill="#a0f4fc"/><rect x="16.00" y="32.00" width="13.35" height="1.35" fill="#3e3062"/><rect x="35.00" y="32.00" width="5.35" height="1.35" fill="#3e3062"/><rect x="0.00" y="33.00" width="3.35" height="1.35" fill="#a0f4fc"/><rect x="3.00" y="33.00" width="2.35" height="1.35" fill="#0074bc"/><rect x="5.00" y="33.00" width="3.35" height="1.35" fill="#a0f4fc"/><rect x="16.00" y="33.00" width="13.35" height="1.35" fill="#3e3062"/><rect x="35.00" y="33.00" width="5.35" height="1.35" fill="#3e3062"/><rect x="0.00" y="34.00" width="8.35" height="1.35" fill="#0074bc"/><rect x="16.00" y="34.00" width="13.35" height="1.35" fill="#3e3062"/><rect x="35.00" y="34.00" width="5.35" height="1.35" fill="#3e3062"/><rect x="0.00" y="35.00" width="3.35" height="1.35" fill="#0074bc"/><rect x="3.00" y="35.00" width="2.35" height="1.35" fill="#36acd2"/><rect x="5.00" y="35.00" width="3.35" height="1.35" fill="#0074bc"/><rect x="16.00" y="35.00" width="13.35" height="1.35" fill="#3e3062"/><rect x="35.00" y="35.00" width="5.35" height="1.35" fill="#3e3062"/><rect x="2.00" y="36.00" width="1.35" height="1.35" fill="#0074bc"/><rect x="3.00" y="36.00" width="2.35" height="1.35" fill="#36acd2"/><rect x="5.00" y="36.00" width="1.35" height="1.35" fill="#0074bc"/><rect x="16.00" y="36.00" width="13.35" height="1.35" fill="#3e3062"/><rect x="35.00" y="36.00" width="5.35" height="1.35" fill="#3e3062"/><rect x="2.00" y="37.00" width="1.35" height="1.35" fill="#1c5c94"/><rect x="3.00" y="37.00" width="2.35" height="1.35" fill="#36acd2"/><rect x="5.00" y="37.00" width="1.35" height="1.35" fill="#1c5c94"/><rect x="16.00" y="37.00" width="13.35" height="1.35" fill="#3e3062"/><rect x="35.00" y="37.00" width="5.35" height="1.35" fill="#3e3062"/><rect x="2.00" y="38.00" width="1.35" height="1.35" fill="#1c5c94"/><rect x="3.00" y="38.00" width="2.35" height="1.35" fill="#36acd2"/><rect x="5.00" y="38.00" width="1.35" height="1.35" fill="#1c5c94"/><rect x="16.00" y="38.00" width="1.35" height="1.35" fill="#3e3062"/><rect x="17.00" y="38.00" width="1.35" height="1.35" fill="#393058"/><rect x="18.00" y="38.00" width="11.35" height="1.35" fill="#3e3062"/><rect x="35.00" y="38.00" width="5.35" height="1.35" fill="#3e3062"/><rect x="2.00" y="39.00" width="1.35" height="1.35" fill="#1c5c94"/><rect x="3.00" y="39.00" width="2.35" height="1.35" fill="#78cce0"/><rect x="5.00" y="39.00" width="1.35" height="1.35" fill="#1c5c94"/><rect x="16.00" y="39.00" width="1.35" height="1.35" fill="#3e3062"/><rect x="17.00" y="39.00" width="1.35" height="1.35" fill="#393058"/><rect x="18.00" y="39.00" width="2.35" height="1.35" fill="#3e3062"/><rect x="20.00" y="39.00" width="1.35" height="1.35" fill="#393058"/><rect x="21.00" y="39.00" width="3.35" height="1.35" fill="#3e3062"/><rect x="24.00" y="39.00" width="1.35" height="1.35" fill="#393058"/><rect x="25.00" y="39.00" width="1.35" height="1.35" fill="#3e3062"/><rect x="26.00" y="39.00" width="1.35" height="1.35" fill="#393058"/><rect x="27.00" y="39.00" width="2.35" height="1.35" fill="#3e3062"/><rect x="35.00" y="39.00" width="2.35" height="1.35" fill="#3e3062"/><rect x="37.00" y="39.00" width="1.35" height="1.35" fill="#393058"/><rect x="38.00" y="39.00" width="2.35" height="1.35" fill="#3e3062"/><rect x="16.00" y="40.00" width="2.35" height="1.35" fill="#393058"/><rect x="18.00" y="40.00" width="1.35" height="1.35" fill="#3e3062"/><rect x="19.00" y="40.00" width="2.35" height="1.35" fill="#393058"/><rect x="21.00" y="40.00" width="1.35" height="1.35" fill="#3e3062"/><rect x="22.00" y="40.00" width="1.35" height="1.35" fill="#393058"/><rect x="23.00" y="40.00" width="1.35" height="1.35" fill="#3e3062"/><rect x="24.00" y="40.00" width="1.35" height="1.35" fill="#393058"/><rect x="25.00" y="40.00" width="1.35" height="1.35" fill="#3e3062"/><rect x="26.00" y="40.00" width="1.35" height="1.35" fill="#393058"/><rect x="27.00" y="40.00" width="1.35" height="1.35" fill="#3e3062"/><rect x="28.00" y="40.00" width="1.35" height="1.35" fill="#393058"/><rect x="35.00" y="40.00" width="1.35" height="1.35" fill="#3e3062"/><rect x="36.00" y="40.00" width="2.35" height="1.35" fill="#393058"/><rect x="38.00" y="40.00" width="2.35" height="1.35" fill="#3e3062"/><rect x="16.00" y="41.00" width="1.35" height="1.35" fill="#393058"/><rect x="17.00" y="41.00" width="1.35" height="1.35" fill="#2c2650"/><rect x="18.00" y="41.00" width="5.35" height="1.35" fill="#393058"/><rect x="23.00" y="41.00" width="1.35" height="1.35" fill="#3e3062"/><rect x="24.00" y="41.00" width="2.35" height="1.35" fill="#393058"/><rect x="26.00" y="41.00" width="1.35" height="1.35" fill="#2c2650"/><rect x="27.00" y="41.00" width="2.35" height="1.35" fill="#393058"/><rect x="35.00" y="41.00" width="2.35" height="1.35" fill="#393058"/><rect x="37.00" y="41.00" width="1.35" height="1.35" fill="#2c2650"/><rect x="38.00" y="41.00" width="1.35" height="1.35" fill="#393058"/><rect x="39.00" y="41.00" width="1.35" height="1.35" fill="#3e3062"/><rect x="16.00" y="42.00" width="1.35" height="1.35" fill="#393058"/><rect x="17.00" y="42.00" width="2.35" height="1.35" fill="#2c2650"/><rect x="19.00" y="42.00" width="1.35" height="1.35" fill="#393058"/><rect x="20.00" y="42.00" width="1.35" height="1.35" fill="#2c2650"/><rect x="21.00" y="42.00" width="3.35" height="1.35" fill="#393058"/><rect x="24.00" y="42.00" width="1.35" height="1.35" fill="#2c2650"/><rect x="25.00" y="42.00" width="1.35" height="1.35" fill="#393058"/><rect x="26.00" y="42.00" width="2.35" height="1.35" fill="#2c2650"/><rect x="28.00" y="42.00" width="1.35" height="1.35" fill="#393058"/><rect x="35.00" y="42.00" width="1.35" height="1.35" fill="#2c2650"/><rect x="36.00" y="42.00" width="1.35" height="1.35" fill="#393058"/><rect x="37.00" y="42.00" width="2.35" height="1.35" fill="#2c2650"/><rect x="39.00" y="42.00" width="1.35" height="1.35" fill="#393058"/><rect x="16.00" y="43.00" width="1.35" height="1.35" fill="#393058"/><rect x="17.00" y="43.00" width="4.35" height="1.35" fill="#2c2650"/><rect x="22.00" y="43.00" width="1.35" height="1.35" fill="#2c2650"/><rect x="23.00" y="43.00" width="1.35" height="1.35" fill="#393058"/><rect x="24.00" y="43.00" width="2.35" height="1.35" fill="#2c2650"/><rect x="27.00" y="43.00" width="2.35" height="1.35" fill="#2c2650"/><rect x="35.00" y="43.00" width="2.35" height="1.35" fill="#2c2650"/><rect x="38.00" y="43.00" width="1.35" height="1.35" fill="#2c2650"/><rect x="39.00" y="43.00" width="1.35" height="1.35" fill="#393058"/><rect x="16.00" y="44.00" width="2.35" height="1.35" fill="#2c2650"/><rect x="19.00" y="44.00" width="2.35" height="1.35" fill="#2c2650"/><rect x="22.00" y="44.00" width="2.35" height="1.35" fill="#2c2650"/><rect x="25.00" y="44.00" width="1.35" height="1.35" fill="#2c2650"/><rect x="36.00" y="44.00" width="1.35" height="1.35" fill="#2c2650"/><rect x="38.00" y="44.00" width="2.35" height="1.35" fill="#2c2650"/><rect x="16.00" y="45.00" width="1.35" height="1.35" fill="#2c2650"/><rect x="20.00" y="45.00" width="1.35" height="1.35" fill="#2c2650"/><rect x="23.00" y="45.00" width="1.35" height="1.35" fill="#2c2650"/><rect x="39.00" y="45.00" width="1.35" height="1.35" fill="#2c2650"/></svg>
<span class="t " style="left:62.00px;top:834.95px;font-size:15.30px;color:#cacad4;-webkit-text-stroke:0.18px #cacad4;transform:scaleX(0.9941);">soul.png</span>
<span class="t " style="left:62.00px;top:856.29px;font-size:13.60px;color:#a0a3b0;-webkit-text-stroke:0.18px #a0a3b0;transform:scaleX(0.9150);">64 x 64px</span>
<svg class="ic" style="left:543.00px;top:843.50px;width:19.00px;height:19.00px" viewBox="0 0 24 24"><path fill="#8a8e9c" fill-rule="evenodd" d="M7.2 11.2a3.2 3.2 0 1 0 0 6.4a3.2 3.2 0 1 0 0-6.4zM14.8 16a2 2 0 1 0 0 4a2 2 0 1 0 0-4zM15.2 4a4.8 4.8 0 1 0 0 9.6a4.8 4.8 0 1 0 0-9.6z"/></svg>
<svg class="ic" style="left:564.00px;top:842.00px;width:23.00px;height:23.00px" viewBox="0 0 24 24"><path fill="#8a8e9c" fill-rule="evenodd" d="M12 2C6.48 2 2 6.48 2 12s4.48 10 10 10 10-4.48 10-10S17.52 2 12 2zm-2 15l-5-5 1.41-1.41L10 14.17l7.59-7.59L19 8l-9 9z"/></svg>
<svg class="ic" style="left:604px;top:24px;width:40px;height:30px" viewBox="604 24 40 30"><path fill="#cacad4" d="M625.5 27.7L629.9 36.8 627.1 38.5 626.1 43.9 621.6 45.5 617 41.3 620.4 38.2 621.5 37zM611.9 33.8L620.4 33.8 621.2 37.4 616.7 41.2zM610.3 48.2L617.2 41.5 621.7 45.4 621 49z"/><path d="M618.6 40.2l3.7 2.8M620.8 37.3l2.8 2.2" stroke="#282c34" stroke-width="1"/></svg><svg class="ic" style="left:647.50px;top:26.80px;width:22.60px;height:22.60px" viewBox="0 0 24 24"><path fill="#cacad4" fill-rule="evenodd" d="M10 9h4V6h3l-5-5-5 5h3v3zm-1 1H6V7l-5 5 5 5v-3h3v-4zm14 2l-5-5v3h-3v4h3v3l5-5zm-9 3h-4v3H7l5 5 5-5h-3v-3z"/></svg><svg class="ic" style="left:685.40px;top:26.80px;width:22.60px;height:22.60px" viewBox="0 0 24 24"><path fill="#cacad4" fill-rule="evenodd" d="M12 4V1L8 5l4 4V6c3.31 0 6 2.69 6 6 0 1.01-.25 1.97-.7 2.8l1.46 1.46C19.54 15.03 20 13.57 20 12c0-4.42-3.58-8-8-8zm0 14c-3.31 0-6-2.69-6-6 0-1.01.25-1.97.7-2.8L5.24 7.74C4.46 8.97 4 10.43 4 12c0 4.42 3.58 8 8 8v3l4-4-4-4v3z"/></svg><svg class="ic" style="left:723.10px;top:26.80px;width:22.60px;height:22.60px" viewBox="0 0 24 24"><path fill="#cacad4" fill-rule="evenodd" d="M12 8c-2.21 0-4 1.79-4 4s1.79 4 4 4 4-1.79 4-4-1.79-4-4-4zm8.94 3c-.46-4.17-3.77-7.48-7.94-7.94V1h-2v2.06C6.83 3.52 3.52 6.83 3.06 11H1v2h2.06c.46 4.17 3.77 7.48 7.94 7.94V23h2v-2.06c4.17-.46 7.48-3.77 7.94-7.94H23v-2h-2.06zM12 19c-3.87 0-7-3.13-7-7s3.13-7 7-7 7 3.13 7 7-3.13 7-7 7z"/></svg><svg class="ic" style="left:758px;top:26px;width:30px;height:26px" viewBox="758 26 30 26"><rect x="761.9" y="33.9" width="7.4" height="7.3" rx="1.2" fill="#cacad4"/><rect x="776.3" y="40.8" width="7.4" height="7.2" rx="1.2" fill="#cacad4"/><path d="M764.8 34.3C766.5 30.8 772 29.4 775.6 32.4 777.2 33.8 778.2 35.2 778.8 36.8" fill="none" stroke="#cacad4" stroke-width="2"/><path d="M775.2 36.1L782.5 32.3 781.3 40.7z" fill="#cacad4"/></svg><svg class="ic" style="left:796px;top:24px;width:30px;height:28px" viewBox="796 24 30 28"><path d="M811.6 31.7H803a1.8 1.8 0 0 0-1.8 1.8V44.9a1.8 1.8 0 0 0 1.8 1.8H815a1.8 1.8 0 0 0 1.8-1.8V40" fill="none" stroke="#cacad4" stroke-width="2.4" stroke-linecap="round"/><path fill="#cacad4" d="M806.3 43.4L807.3 38.8 816.2 29.9 820.2 33.9 811.1 42.4zM817 28.9L818.9 27.3 822.9 31.2 821.2 33z"/></svg><svg class="ic" style="left:827.70px;top:26.60px;width:22.20px;height:22.20px" viewBox="0 0 24 24"><path fill="#cacad4" fill-rule="evenodd" d="M12 8c1.1 0 2-.9 2-2s-.9-2-2-2-2 .9-2 2 .9 2 2 2zm0 2c-1.1 0-2 .9-2 2s.9 2 2 2 2-.9 2-2-.9-2-2-2zm0 6c-1.1 0-2 .9-2 2s.9 2 2 2 2-.9 2-2-.9-2-2-2z"/></svg><svg class="ic" style="left:843.10px;top:26.60px;width:22.20px;height:22.20px" viewBox="0 0 24 24"><path fill="#cacad4" fill-rule="evenodd" d="M12 8c1.1 0 2-.9 2-2s-.9-2-2-2-2 .9-2 2 .9 2 2 2zm0 2c-1.1 0-2 .9-2 2s.9 2 2 2 2-.9 2-2-.9-2-2-2zm0 6c-1.1 0-2 .9-2 2s.9 2 2 2 2-.9 2-2-.9-2-2-2z"/></svg>
<div class="b" style="left:603.00px;top:50.00px;width:36.00px;height:3.00px;background:#3e90ff;"></div>
<svg class="ic" style="left:1195.90px;top:57.00px;width:22.20px;height:22.20px" viewBox="0 0 24 24"><path fill="#cacad4" fill-rule="evenodd" d="M12 8c1.1 0 2-.9 2-2s-.9-2-2-2-2 .9-2 2 .9 2 2 2zm0 2c-1.1 0-2 .9-2 2s.9 2 2 2 2-.9 2-2-.9-2-2-2zm0 6c-1.1 0-2 .9-2 2s.9 2 2 2 2-.9 2-2-.9-2-2-2z"/></svg>
<svg class="ic" style="left:602px;top:53px;width:615px;height:843px;overflow:hidden" viewBox="602 53 615 843"><defs><linearGradient id="gArmL" x1="764" x2="828.5" y1="0" y2="0" gradientUnits="userSpaceOnUse"><stop offset="0" stop-color="#32264f"/><stop offset=".3" stop-color="#2c2249"/><stop offset=".5" stop-color="#261e41"/><stop offset=".56" stop-color="#2c2249"/><stop offset=".75" stop-color="#2e244e"/><stop offset=".76" stop-color="#34285a"/><stop offset="1" stop-color="#33275a"/></linearGradient><linearGradient id="gArmR" x1="929" x2="992" y1="0" y2="0" gradientUnits="userSpaceOnUse"><stop offset="0" stop-color="#231b3c"/><stop offset=".35" stop-color="#2b2148"/><stop offset=".8" stop-color="#34275a"/><stop offset="1" stop-color="#32265a"/></linearGradient><linearGradient id="gSide" x1="0" x2="0" y1="251" y2="462" gradientUnits="userSpaceOnUse"><stop offset="0" stop-color="#221a3c"/><stop offset=".3" stop-color="#281d46"/><stop offset="1" stop-color="#2d204f"/></linearGradient><linearGradient id="gFrontL" x1="0" x2="0" y1="253" y2="380" gradientUnits="userSpaceOnUse"><stop offset="0" stop-color="#2a2248"/><stop offset=".5" stop-color="#2e2450"/><stop offset="1" stop-color="#3a2b5e"/></linearGradient><linearGradient id="gFrontR" x1="0" x2="0" y1="253" y2="462" gradientUnits="userSpaceOnUse"><stop offset="0" stop-color="#2a2248"/><stop offset=".25" stop-color="#30265a"/><stop offset=".45" stop-color="#34285a"/><stop offset=".62" stop-color="#33275a"/><stop offset=".75" stop-color="#2f2652"/><stop offset=".9" stop-color="#2b2149"/><stop offset="1" stop-color="#2b2149"/></linearGradient><linearGradient id="gShade" x1="915" x2="972" y1="0" y2="0" gradientUnits="userSpaceOnUse"><stop offset="0" stop-color="#1c1636" stop-opacity=".75"/><stop offset=".3" stop-color="#1c1636" stop-opacity=".45"/><stop offset="1" stop-color="#1c1636" stop-opacity="0"/></linearGradient><linearGradient id="gShadeV" x1="0" x2="0" y1="330" y2="462" gradientUnits="userSpaceOnUse"><stop offset="0" stop-color="#fff" stop-opacity="0"/><stop offset=".5" stop-color="#fff" stop-opacity="1"/><stop offset="1" stop-color="#fff" stop-opacity="1"/></linearGradient><mask id="mShade" maskUnits="userSpaceOnUse" x="900" y="240" width="90" height="240"><rect x="900" y="240" width="90" height="240" fill="url(#gShadeV)"/></mask></defs><path d="M717.3 719.9L848.5 643.2M717.3 719.9L945.1 774.7M730.1 723.0L859.7 645.3M727.2 714.1L952.7 767.4M743.0 726.1L871.0 647.4M736.8 708.5L960.0 760.3M756.2 729.3L882.5 649.5M746.1 703.0L967.2 753.5M769.5 732.5L894.0 651.7M755.2 697.7L974.1 746.8M783.0 735.7L905.7 653.9M764.1 692.5L980.8 740.3M796.7 739.0L917.6 656.1M772.8 687.5L987.4 734.0M810.6 742.3L929.6 658.3M781.2 682.5L993.7 727.9M824.7 745.7L941.7 660.6M789.4 677.7L999.9 722.0M839.0 749.2L953.9 662.9M797.4 673.1L1005.9 716.2M853.5 752.7L966.3 665.2M805.3 668.5L1011.8 710.6M868.2 756.2L978.9 667.6M812.9 664.0L1017.5 705.1M883.1 759.8L991.6 669.9M820.4 659.7L1023.1 699.7M898.3 763.4L1004.4 672.3M827.6 655.4L1028.5 694.5M913.7 767.1L1017.4 674.8M834.8 651.2L1033.7 689.5M929.3 770.9L1030.6 677.2M841.7 647.2L1038.9 684.5M945.1 774.7L1043.9 679.7M848.5 643.2L1043.9 679.7" stroke="#4a5060" stroke-width="1" fill="none" opacity=".85"/><line x1="717.3" y1="719.9" x2="945.1" y2="774.7" stroke="#e0323e" stroke-width="1.3" /><line x1="945.1" y1="774.7" x2="1043.9" y2="679.7" stroke="#3a78e0" stroke-width="1.3" /><text transform="matrix(3.25,0.8,-1.8,1.38,797.2,755.0)" font-family="Liberation Sans,sans-serif" font-size="10" fill="#5c6270" opacity=".75">N</text><path d="M797.2 759.2l2 4.2h4.8M807 762.4h3" stroke="#5c6270" stroke-width="1" fill="none"/><polygon points="930.1,545.0 958.5,548.0 958.5,682.5 951.6,682.5 951.6,676.7 943.8,676.7 943.8,655.2 937.0,655.2 937.0,691.3 930.1,691.3" fill="#2b2249" /><rect x="930.1" y="545.0" width="6.9" height="110.2" fill="#33275a" /><rect x="930.1" y="655.2" width="6.9" height="36.1" fill="#2e2450" /><rect x="937.0" y="560.0" width="6.8" height="64.0" fill="#2e2450" /><rect x="937.0" y="624.0" width="6.8" height="31.2" fill="#251d42" /><rect x="943.8" y="632.0" width="7.8" height="44.7" fill="#262044" /><rect x="951.6" y="600.0" width="6.9" height="82.5" fill="#292047" /><polygon points="915.0,251.0 972.5,254.5 970.3,392.0 930.0,392.0 930.0,457.6 915.1,462.3" fill="url(#gSide)" /><rect x="915.0" y="252.0" width="8.0" height="34.7" fill="#1e1838" /><rect x="923.0" y="252.0" width="6.8" height="34.7" fill="#221b3c" /><rect x="929.8" y="252.0" width="8.1" height="34.7" fill="#1f1939" /><rect x="937.9" y="252.0" width="6.7" height="18.5" fill="#231c3e" /><rect x="944.6" y="252.0" width="6.7" height="34.7" fill="#1f1939" /><rect x="951.3" y="252.0" width="8.1" height="34.7" fill="#211a3b" /><rect x="959.4" y="252.0" width="6.7" height="18.5" fill="#211a3b" /><rect x="959.4" y="252.0" width="6.7" height="34.7" fill="#251d40" /><rect x="966.1" y="252.0" width="6.5" height="34.7" fill="#211a3b" /><polygon points="915.0,330.0 972.0,330.0 970.3,392.0 930.0,392.0 930.0,457.6 915.1,462.3" fill="url(#gShade)" mask="url(#mShade)"/><polygon points="796.4,253.3 915.0,251.0 915.1,462.3 796.4,470.0" fill="#2a2248" /><polygon points="796.4,253.3 811.3,253.0 811.3,470.0 796.4,470.0" fill="url(#gFrontL)" /><polygon points="898.7,251.3 915.0,251.0 915.1,462.3 898.7,462.3" fill="url(#gFrontR)" /><rect x="796.2" y="253.0" width="42.8" height="17.5" fill="#261f42" /><rect x="869.0" y="252.0" width="46.0" height="18.5" fill="#261e42" /><rect x="796.2" y="270.5" width="14.0" height="17.5" fill="#251e40" /><rect x="810.2" y="270.5" width="15.1" height="17.5" fill="#2e2648" /><rect x="883.8" y="270.5" width="15.2" height="17.5" fill="#2e2648" /><rect x="899.0" y="270.5" width="16.0" height="17.5" fill="#261e42" /><rect x="796.2" y="288.0" width="29.1" height="16.8" fill="#2c2447" /><rect x="883.8" y="288.0" width="15.2" height="17.5" fill="#2e2648" /><rect x="899.0" y="288.0" width="16.0" height="17.5" fill="#2a2145" /><rect x="796.2" y="304.8" width="15.0" height="17.2" fill="#33275a" /><rect x="898.7" y="305.5" width="16.3" height="18.0" fill="#31265a" /><rect x="796.2" y="322.0" width="15.0" height="15.0" fill="#2e2648" /><rect x="796.2" y="337.0" width="15.6" height="18.0" fill="#33265a" /><rect x="796.2" y="355.0" width="15.8" height="16.7" fill="#2e2848" /><rect x="796.2" y="371.7" width="16.0" height="16.3" fill="#32265a" /><rect x="898.7" y="323.5" width="16.3" height="17.5" fill="#2e2650" /><polygon points="795.0,252.0 796.3,252.0 798.2,378.0 795.0,378.0" fill="#191a1e" /><polygon points="811.2,321.0 898.7,323.0 899.0,492.0 849.3,486.0 828.4,480.0 828.4,382.0 812.3,382.0" fill="#191a1e" /><rect x="839.0" y="254.0" width="30.0" height="16.0" fill="#9a9a9a" /><rect x="825.3" y="270.0" width="16.4" height="19.2" fill="#7ccbd4" /><rect x="841.7" y="270.0" width="27.3" height="18.8" fill="#005c94" /><rect x="869.0" y="269.7" width="14.8" height="19.1" fill="#7ccbd4" /><rect x="825.3" y="289.2" width="15.6" height="15.8" fill="#005c94" /><rect x="840.9" y="288.8" width="14.1" height="17.2" fill="#a8a8a8" /><rect x="855.0" y="288.8" width="14.0" height="17.2" fill="#959595" /><rect x="869.0" y="288.8" width="14.8" height="17.7" fill="#005c94" /><polygon points="811.2,304.3 898.7,306.0 898.7,323.6 811.2,321.3" fill="#aaaaaa" /><rect x="827.6" y="321.3" width="14.1" height="18.7" fill="#aaaaaa" /><rect x="827.6" y="340.0" width="14.1" height="16.3" fill="#9c9c9c" /><rect x="827.6" y="356.3" width="14.1" height="17.2" fill="#909090" /><rect x="827.6" y="373.5" width="15.4" height="16.1" fill="#104878" /><rect x="841.7" y="322.0" width="27.3" height="34.3" fill="#2488a8" /><rect x="841.7" y="356.3" width="27.3" height="16.3" fill="#2e90b0" /><rect x="843.0" y="372.6" width="26.6" height="16.4" fill="#5ca0b2" /><rect x="869.0" y="323.3" width="14.2" height="35.4" fill="#9a9a9a" /><rect x="869.0" y="358.7" width="14.2" height="15.8" fill="#909090" /><rect x="869.6" y="374.5" width="14.8" height="16.5" fill="#104878" /><polygon points="883.2,323.5 898.7,324.0 898.7,391.5 884.4,391.0" fill="#5b595b" /><polygon points="828.2,389.0 849.3,389.5 849.3,527.0 836.5,527.0 836.5,548.0 828.2,548.0" fill="#261e40" /><rect x="828.2" y="388.9" width="28.9" height="12.7" fill="#a8a8a8" /><rect x="886.0" y="390.4" width="13.0" height="13.3" fill="#9e9e9e" /><rect x="828.2" y="416.2" width="15.6" height="16.4" fill="#a8a8a8" /><rect x="843.8" y="417.6" width="14.1" height="15.8" fill="#989898" /><rect x="886.0" y="420.0" width="13.0" height="16.5" fill="#9e9e9e" /><linearGradient id="gRib" x1="0" x2="0" y1="448" y2="463" gradientUnits="userSpaceOnUse"><stop offset="0" stop-color="#a2a2a2"/><stop offset="1" stop-color="#888"/></linearGradient><rect x="829.0" y="448.2" width="14.8" height="14.8" fill="url(#gRib)" /><rect x="844.6" y="465.4" width="13.3" height="14.8" fill="#8a8a8a" /><rect x="886.0" y="468.5" width="14.0" height="16.5" fill="#8a8a8a" /><rect x="900.0" y="460.7" width="14.9" height="10.2" fill="#8c8c8c" /><polygon points="764.1,379.7 798.0,375.0 828.4,378.3 828.4,480.0 816.3,480.0 816.3,537.0 806.4,535.0 806.4,519.0 793.4,519.0 793.4,546.0 779.3,546.0 779.3,530.0 767.4,530.0 766.0,486.0" fill="url(#gArmL)" /><rect x="798.0" y="388.0" width="14.5" height="15.8" fill="#241c40" /><rect x="798.0" y="403.8" width="14.5" height="16.2" fill="#2d254e" /><rect x="798.0" y="420.0" width="14.5" height="32.0" fill="#282048" /><rect x="766.0" y="486.0" width="15.0" height="44.0" fill="#2a2148" /><rect x="781.0" y="490.0" width="14.0" height="13.0" fill="#30274f" /><rect x="781.0" y="503.0" width="12.4" height="43.0" fill="#2a2148" /><rect x="795.0" y="486.0" width="13.0" height="17.0" fill="#2b2249" /><rect x="808.0" y="480.0" width="8.3" height="39.0" fill="#2f2650" /><polygon points="812.5,376.4 828.4,378.3 828.4,382.4 812.5,381.2" fill="#392b60" /><rect x="793.0" y="519.1" width="7.8" height="12.2" fill="#9a9a9a" /><rect x="800.8" y="520.4" width="5.2" height="12.2" fill="#a6a6a6" /><polygon points="793.0,530.8 800.8,531.3 806.0,532.6 806.0,534.7 816.3,536.5 816.3,548.2 802.1,546.0 793.0,545.1" fill="#7c7c7c" /><polygon points="793.0,530.8 800.8,531.3 802.1,546.0 793.0,545.1" fill="#858585" /><polygon points="789.1,548.6 793.9,545.1 802.1,546.0 816.3,548.2 816.9,562.1 802.1,559.9 790.0,558.6" fill="#8e8e8e" /><polygon points="789.1,548.6 793.9,545.1 802.1,546.0 802.1,559.9 790.0,558.6" fill="#9e9e9e" /><rect x="830.3" y="546.9" width="1.1" height="9.1" fill="#8a8a8a" /><polygon points="929.6,388.1 954.9,383.1 1017.4,385.0 992.1,391.2" fill="#32265a" /><polygon points="929.6,388.1 992.1,391.2 991.0,559.0 974.0,559.0 974.0,540.0 959.5,540.0 959.5,572.0 944.0,572.0 944.0,552.0 930.5,552.0" fill="url(#gArmR)" /><polygon points="992.1,391.2 1017.4,385.0 1015.8,545.6 1009.5,545.6 1009.5,550.0 1003.0,550.0 1003.0,565.0 997.0,565.0 997.0,570.6 991.0,570.6" fill="#2a2048" /><rect x="944.0" y="522.0" width="15.5" height="50.0" fill="#281f45" /><rect x="959.5" y="506.5" width="16.5" height="33.5" fill="#292046" /><rect x="976.0" y="525.0" width="15.0" height="31.0" fill="#271e43" /><rect x="930.5" y="505.0" width="13.5" height="47.0" fill="#2a2148" /><rect x="997.0" y="520.0" width="6.0" height="45.0" fill="#241c3f" /><rect x="1003.0" y="534.6" width="6.5" height="15.4" fill="#261e42" /><rect x="959.1" y="539.1" width="6.7" height="14.3" fill="#a0a0a0" /><rect x="965.8" y="539.6" width="7.6" height="14.4" fill="#aaaaaa" /><polygon points="959.1,552.1 973.4,553.9 973.4,556.5 981.2,558.6 981.2,569.5 965.6,568.2 959.5,567.3" fill="#7e7e7e" /><polygon points="959.1,552.1 965.8,553.0 965.8,568.2 959.5,567.3" fill="#868686" /><polygon points="989.9,541.4 994.2,540.6 994.2,548.2 989.9,548.8" fill="#a0a0a0" /><polygon points="989.9,548.8 994.2,548.0 994.2,563.4 981.2,569.5 981.2,558.6 989.9,558.2" fill="#707070" /><polygon points="951.3,570.8 959.1,570.3 965.6,568.2 981.2,569.5 980.8,586.8 951.3,581.6" fill="#9c9c9c" /><polygon points="965.6,568.2 981.2,569.5 980.8,586.8 965.6,584.2" fill="#a4a4a4" /><polygon points="981.2,569.5 994.2,563.4 992.9,579.0 980.8,586.8" fill="#8a8a8a" /><polygon points="816.5,477.5 830.8,479.0 830.8,657.8 818.0,656.2" fill="#3e2f66" /><polygon points="817.6,640.0 830.8,641.0 830.8,657.8 818.0,656.2" fill="#372a5c" /><polygon points="915.0,462.3 930.5,458.0 930.5,677.0 915.3,676.5" fill="#3d2e64" /><polygon points="915.3,645.0 930.5,646.0 930.5,677.0 915.3,676.5" fill="#352858" /><polygon points="915.0,462.3 930.5,458.0 930.5,489.6 915.0,488.0" fill="#34285c" /><g stroke="#3e8cf6" stroke-width="1.1" opacity=".9"><line x1="814.9" y1="477.1" x2="930.5" y2="489.6" stroke="#3e8cf6" stroke-width="1" /><line x1="857.9" y1="467.7" x2="914.9" y2="473.2" stroke="#3e8cf6" stroke-width="1" /><line x1="816.5" y1="477.3" x2="816.8" y2="497.0" stroke="#3e8cf6" stroke-width="1" /><line x1="817.2" y1="527.0" x2="817.6" y2="556.0" stroke="#3e8cf6" stroke-width="1" /><line x1="818.0" y1="588.0" x2="818.4" y2="616.0" stroke="#3e8cf6" stroke-width="1" /><line x1="818.8" y1="646.0" x2="819.3" y2="684.3" stroke="#3e8cf6" stroke-width="1" /><line x1="850.0" y1="525.3" x2="851.3" y2="664.0" stroke="#3e8cf6" stroke-width="1" /><line x1="930.5" y1="489.6" x2="929.4" y2="707.7" stroke="#3e8cf6" stroke-width="1" /><line x1="958.5" y1="594.8" x2="957.5" y2="685.1" stroke="#3e8cf6" stroke-width="1" /><line x1="819.3" y1="684.3" x2="929.4" y2="707.7" stroke="#3e8cf6" stroke-width="1" /><line x1="819.3" y1="684.3" x2="851.3" y2="664.0" stroke="#3e8cf6" stroke-width="1" /><line x1="851.3" y1="664.0" x2="957.5" y2="685.1" stroke="#3e8cf6" stroke-width="1" /><line x1="929.4" y1="707.7" x2="957.5" y2="685.1" stroke="#3e8cf6" stroke-width="1" /></g><line x1="887.5" y1="634.7" x2="887.5" y2="494.0" stroke="#26d044" stroke-width="1" /><polygon points="887.2,474.0 880.4,494.5 894.6,494.5" fill="#22cc44" /><line x1="815.0" y1="572.1" x2="914.9" y2="587.4" stroke="#e03848" stroke-width="1" /><polygon points="795.2,569.4 812.1,565.1 814.7,572.0 811.4,578.1" fill="#d63242" /><line x1="861.0" y1="597.1" x2="927.4" y2="562.0" stroke="#3c6cd8" stroke-width="1" /><circle cx="929.4" cy="561.3" r="6.3" fill="#2f62dc"/></svg>
<svg class="ic" style="left:609.00px;top:898.50px;width:21.00px;height:21.00px" viewBox="0 0 24 24"><path fill="#cacad4" fill-rule="evenodd" d="M9 16.17L4.83 12l-1.42 1.41L9 19 21 7l-1.41-1.41z"/></svg>
<svg class="ic" style="left:641px;top:898px;width:24px;height:21px" viewBox="0 0 24 21"><path fill="#cacad4" d="M12 1l5.8 2.9v6.6L12 13.4 6.2 10.5V3.9zM7 11.8l5 2.5 5-2.5 5 3.4-10 5.3-10-5.3z"/></svg>
<span class="t " style="left:676.00px;top:899.17px;font-size:15.50px;color:#cacad4;-webkit-text-stroke:0.18px #cacad4;transform:scaleX(1.0085);">1</span>
<span class="t " style="left:1119.00px;top:899.17px;font-size:15.50px;color:#cacad4;-webkit-text-stroke:0.18px #cacad4;transform:scaleX(0.8569);">60 FPS</span>
<span class="t " style="left:1174.00px;top:899.17px;font-size:15.50px;color:#cacad4;-webkit-text-stroke:0.18px #cacad4;transform:scaleX(0.9375);">100%</span>
<span class="t " style="left:1226.00px;top:29.82px;font-size:17.00px;color:#cacad4;-webkit-text-stroke:0.18px #cacad4;transform:scaleX(0.9714);">Start</span>
<span class="t " style="left:1272.00px;top:29.82px;font-size:17.00px;color:#cacad4;-webkit-text-stroke:0.18px #cacad4;transform:scaleX(0.9864);">Edit</span>
<span class="t " style="left:1311.00px;top:29.82px;font-size:17.00px;color:#cacad4;-webkit-text-stroke:0.18px #cacad4;transform:scaleX(0.9808);">Paint</span>
<span class="t " style="left:1360.00px;top:29.82px;font-size:17.00px;color:#cacad4;-webkit-text-stroke:0.18px #cacad4;transform:scaleX(0.9687);">Display</span>
<div class="b" style="left:1271.20px;top:50.00px;width:30.00px;height:3.00px;background:#3e90ff;"></div>
<span class="t " style="left:1229.00px;top:63.16px;font-size:16.40px;color:#848891;-webkit-text-stroke:0.18px #848891;transform:scaleX(0.8952);">ELEMENT</span>
<span class="t " style="left:1229.00px;top:94.34px;font-size:15.20px;color:#cacad4;-webkit-text-stroke:0.18px #cacad4;transform:scaleX(1.0172);">Position</span><div class="b" style="left:1218.00px;top:116.30px;width:72.00px;height:27.40px;background:#3a3f4b;"></div><span class="t " style="left:1246.00px;top:122.42px;font-size:15.00px;color:#cacad4;-webkit-text-stroke:0.18px #cacad4;transform:scaleX(0.9095);">3.9</span><svg class="ic" style="left:1282.00px;top:116.30px;width:8px;height:8px" viewBox="0 0 8 8"><path d="M0 0h8v8z" fill="#e0202c"/></svg><div class="b" style="left:1292.00px;top:116.30px;width:72.00px;height:27.40px;background:#3a3f4b;"></div><span class="t " style="left:1326.00px;top:122.42px;font-size:15.00px;color:#cacad4;-webkit-text-stroke:0.18px #cacad4;transform:scaleX(0.8480);">1</span><svg class="ic" style="left:1356.00px;top:116.30px;width:8px;height:8px" viewBox="0 0 8 8"><path d="M0 0h8v8z" fill="#22c022"/></svg><div class="b" style="left:1218.00px;top:146.20px;width:72.00px;height:27.40px;background:#3a3f4b;"></div><span class="t " style="left:1246.00px;top:152.32px;font-size:15.00px;color:#cacad4;-webkit-text-stroke:0.18px #cacad4;transform:scaleX(0.9093);">5.9</span><svg class="ic" style="left:1282.00px;top:146.20px;width:8px;height:8px" viewBox="0 0 8 8"><path d="M0 0h8v8z" fill="#2098e8"/></svg>
<span class="t " style="left:1229.00px;top:178.14px;font-size:15.20px;color:#cacad4;-webkit-text-stroke:0.18px #cacad4;transform:scaleX(0.9338);">Size</span><div class="b" style="left:1218.00px;top:200.10px;width:72.00px;height:27.40px;background:#3a3f4b;"></div><span class="t " style="left:1246.00px;top:206.22px;font-size:15.00px;color:#cacad4;-webkit-text-stroke:0.18px #cacad4;transform:scaleX(0.9093);">8.2</span><svg class="ic" style="left:1282.00px;top:200.10px;width:8px;height:8px" viewBox="0 0 8 8"><path d="M0 0h8v8z" fill="#e0202c"/></svg><div class="b" style="left:1292.00px;top:200.10px;width:72.00px;height:27.40px;background:#3a3f4b;"></div><span class="t " style="left:1322.00px;top:206.22px;font-size:15.00px;color:#cacad4;-webkit-text-stroke:0.18px #cacad4;transform:scaleX(0.9004);">14</span><svg class="ic" style="left:1356.00px;top:200.10px;width:8px;height:8px" viewBox="0 0 8 8"><path d="M0 0h8v8z" fill="#22c022"/></svg><div class="b" style="left:1218.00px;top:230.00px;width:72.00px;height:27.40px;background:#3a3f4b;"></div><span class="t " style="left:1246.00px;top:236.12px;font-size:15.00px;color:#cacad4;-webkit-text-stroke:0.18px #cacad4;transform:scaleX(0.9098);">4.2</span><svg class="ic" style="left:1282.00px;top:230.00px;width:8px;height:8px" viewBox="0 0 8 8"><path d="M0 0h8v8z" fill="#2098e8"/></svg><div class="b" style="left:1292.00px;top:230.00px;width:72.00px;height:27.40px;background:#3a3f4b;"></div><span class="t " style="left:1326.00px;top:236.12px;font-size:15.00px;color:#cacad4;-webkit-text-stroke:0.18px #cacad4;transform:scaleX(0.8575);">0</span>
<span class="t " style="left:1229.00px;top:262.44px;font-size:15.20px;color:#cacad4;-webkit-text-stroke:0.18px #cacad4;transform:scaleX(0.9924);">Pivot Point</span><div class="b" style="left:1218.00px;top:284.40px;width:72.00px;height:27.40px;background:#3a3f4b;"></div><span class="t " style="left:1252.00px;top:290.52px;font-size:15.00px;color:#cacad4;-webkit-text-stroke:0.18px #cacad4;transform:scaleX(0.8558);">8</span><svg class="ic" style="left:1282.00px;top:284.40px;width:8px;height:8px" viewBox="0 0 8 8"><path d="M0 0h8v8z" fill="#e0202c"/></svg><div class="b" style="left:1292.00px;top:284.40px;width:72.00px;height:27.40px;background:#3a3f4b;"></div><span class="t " style="left:1326.00px;top:290.52px;font-size:15.00px;color:#cacad4;-webkit-text-stroke:0.18px #cacad4;transform:scaleX(0.8558);">8</span><svg class="ic" style="left:1356.00px;top:284.40px;width:8px;height:8px" viewBox="0 0 8 8"><path d="M0 0h8v8z" fill="#22c022"/></svg><div class="b" style="left:1218.00px;top:314.30px;width:72.00px;height:27.40px;background:#3a3f4b;"></div><span class="t " style="left:1252.00px;top:320.42px;font-size:15.00px;color:#cacad4;-webkit-text-stroke:0.18px #cacad4;transform:scaleX(0.8558);">8</span><svg class="ic" style="left:1282.00px;top:314.30px;width:8px;height:8px" viewBox="0 0 8 8"><path d="M0 0h8v8z" fill="#2098e8"/></svg>
<span class="t " style="left:1229.00px;top:346.44px;font-size:15.20px;color:#cacad4;-webkit-text-stroke:0.18px #cacad4;transform:scaleX(1.0167);">Rotation</span><div class="b" style="left:1218.00px;top:368.40px;width:72.00px;height:27.40px;background:#3a3f4b;"></div><span class="t " style="left:1252.00px;top:374.52px;font-size:15.00px;color:#cacad4;-webkit-text-stroke:0.18px #cacad4;transform:scaleX(0.8575);">0</span><svg class="ic" style="left:1282.00px;top:368.40px;width:8px;height:8px" viewBox="0 0 8 8"><path d="M0 0h8v8z" fill="#e0202c"/></svg><div class="b" style="left:1292.00px;top:368.40px;width:72.00px;height:27.40px;background:#3a3f4b;"></div><span class="t " style="left:1326.00px;top:374.52px;font-size:15.00px;color:#cacad4;-webkit-text-stroke:0.18px #cacad4;transform:scaleX(0.8575);">0</span><svg class="ic" style="left:1356.00px;top:368.40px;width:8px;height:8px" viewBox="0 0 8 8"><path d="M0 0h8v8z" fill="#22c022"/></svg><div class="b" style="left:1218.00px;top:398.30px;width:72.00px;height:27.40px;background:#3a3f4b;"></div><span class="t " style="left:1252.00px;top:404.42px;font-size:15.00px;color:#cacad4;-webkit-text-stroke:0.18px #cacad4;transform:scaleX(0.8575);">0</span><svg class="ic" style="left:1282.00px;top:398.30px;width:8px;height:8px" viewBox="0 0 8 8"><path d="M0 0h8v8z" fill="#2098e8"/></svg>
<svg class="ic" style="left:1400.00px;top:119.00px;width:22.20px;height:22.20px" viewBox="0 0 24 24"><path fill="#cacad4" fill-rule="evenodd" d="M12 8c1.1 0 2-.9 2-2s-.9-2-2-2-2 .9-2 2 .9 2 2 2zm0 2c-1.1 0-2 .9-2 2s.9 2 2 2 2-.9 2-2-.9-2-2-2zm0 6c-1.1 0-2 .9-2 2s.9 2 2 2 2-.9 2-2-.9-2-2-2z"/></svg>
<svg class="ic" style="left:1400.00px;top:202.80px;width:22.20px;height:22.20px" viewBox="0 0 24 24"><path fill="#cacad4" fill-rule="evenodd" d="M12 8c1.1 0 2-.9 2-2s-.9-2-2-2-2 .9-2 2 .9 2 2 2zm0 2c-1.1 0-2 .9-2 2s.9 2 2 2 2-.9 2-2-.9-2-2-2zm0 6c-1.1 0-2 .9-2 2s.9 2 2 2 2-.9 2-2-.9-2-2-2z"/></svg>
<svg class="ic" style="left:1400.00px;top:287.10px;width:22.20px;height:22.20px" viewBox="0 0 24 24"><path fill="#cacad4" fill-rule="evenodd" d="M12 8c1.1 0 2-.9 2-2s-.9-2-2-2-2 .9-2 2 .9 2 2 2zm0 2c-1.1 0-2 .9-2 2s.9 2 2 2 2-.9 2-2-.9-2-2-2zm0 6c-1.1 0-2 .9-2 2s.9 2 2 2 2-.9 2-2-.9-2-2-2z"/></svg>
<svg class="ic" style="left:1400.00px;top:371.10px;width:22.20px;height:22.20px" viewBox="0 0 24 24"><path fill="#cacad4" fill-rule="evenodd" d="M12 8c1.1 0 2-.9 2-2s-.9-2-2-2-2 .9-2 2 .9 2 2 2zm0 2c-1.1 0-2 .9-2 2s.9 2 2 2 2-.9 2-2-.9-2-2-2zm0 6c-1.1 0-2 .9-2 2s.9 2 2 2 2-.9 2-2-.9-2-2-2z"/></svg>
<svg class="ic" style="left:1299.00px;top:317.00px;width:22.00px;height:22.00px" viewBox="0 0 24 24"><path fill="#cacad4" fill-rule="evenodd" d="M5 15H3v4c0 1.1.9 2 2 2h4v-2H5v-4zM5 5h4V3H5c-1.1 0-2 .9-2 2v4h2V5zm14-2h-4v2h4v4h2V5c0-1.1-.9-2-2-2zm0 16h-4v2h4c1.1 0 2-.9 2-2v-4h-2v4zM12 9c-1.66 0-3 1.34-3 3s1.34 3 3 3 3-1.34 3-3-1.34-3-3-3z"/></svg>
<svg class="ic" style="left:1299.00px;top:401.50px;width:22.00px;height:22.00px" viewBox="0 0 24 24"><path fill="#cacad4" fill-rule="evenodd" d="M19 5v14H5V5h14m0-2H5c-1.1 0-2 .9-2 2v14c0 1.1.9 2 2 2h14c1.1 0 2-.9 2-2V5c0-1.1-.9-2-2-2z"/></svg>
<span class="t " style="left:1230.00px;top:440.76px;font-size:16.40px;color:#848891;-webkit-text-stroke:0.18px #848891;transform:scaleX(0.9189);">OUTLINER</span>
<svg class="ic" style="left:1224.50px;top:473.00px;width:23.00px;height:23.00px" viewBox="0 0 24 24"><path fill="#cacad4" fill-rule="evenodd" d="M19 3H5c-1.11 0-2 .9-2 2v14c0 1.1.89 2 2 2h14c1.1 0 2-.9 2-2V5c0-1.1-.9-2-2-2zm-2 10h-4v4h-2v-4H7v-2h4V7h2v4h4v2z"/></svg>
<svg class="ic" style="left:1262.00px;top:472.00px;width:24.00px;height:24.00px" viewBox="0 0 24 24"><path fill="#cacad4" fill-rule="evenodd" d="M20 6h-8l-2-2H4c-1.11 0-1.99.89-1.99 2L2 18c0 1.11.89 2 2 2h16c1.11 0 2-.89 2-2V8c0-1.11-.89-2-2-2zm-1 8h-3v3h-2v-3h-3v-2h3V9h2v3h3v2z"/></svg>
<svg class="ic" style="left:1301.50px;top:473.00px;width:22.00px;height:22.00px" viewBox="0 0 24 24"><path fill="#cacad4" fill-rule="evenodd" d="M3 4h18v7H3zM3 13h18v7H3z"/></svg>
<span class="t " style="left:1371.00px;top:474.17px;font-size:15.50px;color:#cacad4;-webkit-text-stroke:0.18px #cacad4;transform:scaleX(0.9439);">1/12</span>
<svg class="ic" style="left:1400.00px;top:472.80px;width:22.20px;height:22.20px" viewBox="0 0 24 24"><path fill="#cacad4" fill-rule="evenodd" d="M12 8c1.1 0 2-.9 2-2s-.9-2-2-2-2 .9-2 2 .9 2 2 2zm0 2c-1.1 0-2 .9-2 2s.9 2 2 2 2-.9 2-2-.9-2-2-2zm0 6c-1.1 0-2 .9-2 2s.9 2 2 2 2-.9 2-2-.9-2-2-2z"/></svg>
<svg class="ic" style="left:1223.00px;top:507.20px;width:9px;height:12px" viewBox="0 0 9 12"><path d="M1.4 1.4l4.6 4.6-4.6 4.6" fill="none" stroke="#8c8e9b" stroke-width="2.4"/></svg>
<svg class="ic" style="left:1239.90px;top:506.60px;width:17.2px;height:12.8px" viewBox="0 0 17.2 12.8"><path fill="#cacad4" d="M1.5 0h5.2l1.7 1.7h7.3a1.5 1.5 0 0 1 1.5 1.5v8a1.5 1.5 0 0 1-1.5 1.5h-14.2a1.5 1.5 0 0 1-1.5-1.5v-9.7a1.5 1.5 0 0 1 1.5-1.5z"/></svg>
<span class="t " style="left:1264.00px;top:505.52px;font-size:14.90px;color:#cacad4;-webkit-text-stroke:0.18px #cacad4;transform:scaleX(0.9873);">Head</span>
<svg class="ic" style="left:1390.80px;top:503.10px;width:19.10px;height:19.10px" viewBox="0 0 24 24"><path fill="#cacad4" fill-rule="evenodd" d="M12 4.5C7 4.5 2.73 7.61 1 12c1.73 4.39 6 7.5 11 7.5s9.27-3.11 11-7.5c-1.73-4.39-6-7.5-11-7.5zM12 17a5 5 0 1 1 0-10a5 5 0 1 1 0 10zM12 8.3c-.4 0-.8.06-1.1.18a2 2 0 1 1-2.4 2.4A3.7 3.7 0 1 0 12 8.3z"/></svg>
<svg class="ic" style="left:1221.70px;top:537.20px;width:12px;height:9px" viewBox="0 0 12 9"><path d="M1.2 1.4l4.6 4.6 4.6-4.6" fill="none" stroke="#8c8e9b" stroke-width="2.4"/></svg>
<svg class="ic" style="left:1239.90px;top:534.60px;width:17.2px;height:12.8px" viewBox="0 0 17.2 12.8"><path fill="#cacad4" d="M1.5 0h5.2l1.7 1.7h7.3a1.5 1.5 0 0 1 1.5 1.5v8a1.5 1.5 0 0 1-1.5 1.5h-14.2a1.5 1.5 0 0 1-1.5-1.5v-9.7a1.5 1.5 0 0 1 1.5-1.5z"/></svg>
<span class="t " style="left:1264.00px;top:533.52px;font-size:14.90px;color:#cacad4;-webkit-text-stroke:0.18px #cacad4;transform:scaleX(1.0306);">body</span>
<svg class="ic" style="left:1390.80px;top:531.10px;width:19.10px;height:19.10px" viewBox="0 0 24 24"><path fill="#cacad4" fill-rule="evenodd" d="M12 4.5C7 4.5 2.73 7.61 1 12c1.73 4.39 6 7.5 11 7.5s9.27-3.11 11-7.5c-1.73-4.39-6-7.5-11-7.5zM12 17a5 5 0 1 1 0-10a5 5 0 1 1 0 10zM12 8.3c-.4 0-.8.06-1.1.18a2 2 0 1 1-2.4 2.4A3.7 3.7 0 1 0 12 8.3z"/></svg>
<svg class="ic" style="left:1255.80px;top:560.70px;width:17.2px;height:16.4px" viewBox="0 0 17.2 16.4"><path fill="#cacad4" stroke="#cacad4" stroke-width=".5" stroke-linejoin="round" fill-rule="evenodd" d="M8.6 0.3L16.8 3.5V12L8.6 16.1 0.4 12V3.5zM8.6 2.5L14.4 4.8 8.6 6.9 2.8 4.8zM10.5 8.7L14.3 7v4l-3.8 1.9z"/></svg>
<span class="t " style="left:1280.00px;top:562.42px;font-size:14.90px;color:#cacad4;-webkit-text-stroke:0.18px #cacad4;transform:scaleX(1.0067);">Body</span>
<svg class="ic" style="left:1390.80px;top:559.10px;width:19.10px;height:19.10px" viewBox="0 0 24 24"><path fill="#cacad4" fill-rule="evenodd" d="M12 4.5C7 4.5 2.73 7.61 1 12c1.73 4.39 6 7.5 11 7.5s9.27-3.11 11-7.5c-1.73-4.39-6-7.5-11-7.5zM12 17a5 5 0 1 1 0-10a5 5 0 1 1 0 10zM12 8.3c-.4 0-.8.06-1.1.18a2 2 0 1 1-2.4 2.4A3.7 3.7 0 1 0 12 8.3z"/></svg>
<div class="b" style="left:1217.00px;top:583.80px;width:196.00px;height:28.00px;background:#474d5d;"></div>
<svg class="ic" style="left:1255.80px;top:588.70px;width:17.2px;height:16.4px" viewBox="0 0 17.2 16.4"><path fill="#cacad4" stroke="#cacad4" stroke-width=".5" stroke-linejoin="round" fill-rule="evenodd" d="M8.6 0.3L16.8 3.5V12L8.6 16.1 0.4 12V3.5zM8.6 2.5L14.4 4.8 8.6 6.9 2.8 4.8zM10.5 8.7L14.3 7v4l-3.8 1.9z"/></svg>
<span class="t " style="left:1280.00px;top:590.42px;font-size:14.90px;color:#cacad4;-webkit-text-stroke:0.18px #cacad4;transform:scaleX(1.0412);">robe</span>
<svg class="ic" style="left:1390.80px;top:587.10px;width:19.10px;height:19.10px" viewBox="0 0 24 24"><path fill="#cacad4" fill-rule="evenodd" d="M12 4.5C7 4.5 2.73 7.61 1 12c1.73 4.39 6 7.5 11 7.5s9.27-3.11 11-7.5c-1.73-4.39-6-7.5-11-7.5zM12 17a5 5 0 1 1 0-10a5 5 0 1 1 0 10zM12 8.3c-.4 0-.8.06-1.1.18a2 2 0 1 1-2.4 2.4A3.7 3.7 0 1 0 12 8.3z"/></svg>
<svg class="ic" style="left:1255.80px;top:616.70px;width:17.2px;height:16.4px" viewBox="0 0 17.2 16.4"><path fill="#cacad4" stroke="#cacad4" stroke-width=".5" stroke-linejoin="round" fill-rule="evenodd" d="M8.6 0.3L16.8 3.5V12L8.6 16.1 0.4 12V3.5zM8.6 2.5L14.4 4.8 8.6 6.9 2.8 4.8zM10.5 8.7L14.3 7v4l-3.8 1.9z"/></svg>
<span class="t " style="left:1280.00px;top:618.42px;font-size:14.90px;color:#cacad4;-webkit-text-stroke:0.18px #cacad4;transform:scaleX(1.0412);">robe</span>
<svg class="ic" style="left:1390.80px;top:615.10px;width:19.10px;height:19.10px" viewBox="0 0 24 24"><path fill="#cacad4" fill-rule="evenodd" d="M12 4.5C7 4.5 2.73 7.61 1 12c1.73 4.39 6 7.5 11 7.5s9.27-3.11 11-7.5c-1.73-4.39-6-7.5-11-7.5zM12 17a5 5 0 1 1 0-10a5 5 0 1 1 0 10zM12 8.3c-.4 0-.8.06-1.1.18a2 2 0 1 1-2.4 2.4A3.7 3.7 0 1 0 12 8.3z"/></svg>
<svg class="ic" style="left:1223.00px;top:647.20px;width:9px;height:12px" viewBox="0 0 9 12"><path d="M1.4 1.4l4.6 4.6-4.6 4.6" fill="none" stroke="#8c8e9b" stroke-width="2.4"/></svg>
<svg class="ic" style="left:1239.90px;top:646.60px;width:17.2px;height:12.8px" viewBox="0 0 17.2 12.8"><path fill="#cacad4" d="M1.5 0h5.2l1.7 1.7h7.3a1.5 1.5 0 0 1 1.5 1.5v8a1.5 1.5 0 0 1-1.5 1.5h-14.2a1.5 1.5 0 0 1-1.5-1.5v-9.7a1.5 1.5 0 0 1 1.5-1.5z"/></svg>
<span class="t " style="left:1265.00px;top:645.52px;font-size:14.90px;color:#cacad4;-webkit-text-stroke:0.18px #cacad4;transform:scaleX(1.0044);">r arm</span>
<svg class="ic" style="left:1390.80px;top:643.10px;width:19.10px;height:19.10px" viewBox="0 0 24 24"><path fill="#cacad4" fill-rule="evenodd" d="M12 4.5C7 4.5 2.73 7.61 1 12c1.73 4.39 6 7.5 11 7.5s9.27-3.11 11-7.5c-1.73-4.39-6-7.5-11-7.5zM12 17a5 5 0 1 1 0-10a5 5 0 1 1 0 10zM12 8.3c-.4 0-.8.06-1.1.18a2 2 0 1 1-2.4 2.4A3.7 3.7 0 1 0 12 8.3z"/></svg>
<svg class="ic" style="left:1223.00px;top:675.20px;width:9px;height:12px" viewBox="0 0 9 12"><path d="M1.4 1.4l4.6 4.6-4.6 4.6" fill="none" stroke="#8c8e9b" stroke-width="2.4"/></svg>
<svg class="ic" style="left:1239.90px;top:674.60px;width:17.2px;height:12.8px" viewBox="0 0 17.2 12.8"><path fill="#cacad4" d="M1.5 0h5.2l1.7 1.7h7.3a1.5 1.5 0 0 1 1.5 1.5v8a1.5 1.5 0 0 1-1.5 1.5h-14.2a1.5 1.5 0 0 1-1.5-1.5v-9.7a1.5 1.5 0 0 1 1.5-1.5z"/></svg>
<span class="t " style="left:1265.00px;top:673.52px;font-size:14.90px;color:#cacad4;-webkit-text-stroke:0.18px #cacad4;transform:scaleX(1.0315);">l arm</span>
<svg class="ic" style="left:1390.80px;top:671.10px;width:19.10px;height:19.10px" viewBox="0 0 24 24"><path fill="#cacad4" fill-rule="evenodd" d="M12 4.5C7 4.5 2.73 7.61 1 12c1.73 4.39 6 7.5 11 7.5s9.27-3.11 11-7.5c-1.73-4.39-6-7.5-11-7.5zM12 17a5 5 0 1 1 0-10a5 5 0 1 1 0 10zM12 8.3c-.4 0-.8.06-1.1.18a2 2 0 1 1-2.4 2.4A3.7 3.7 0 1 0 12 8.3z"/></svg>
</div></body></html>
